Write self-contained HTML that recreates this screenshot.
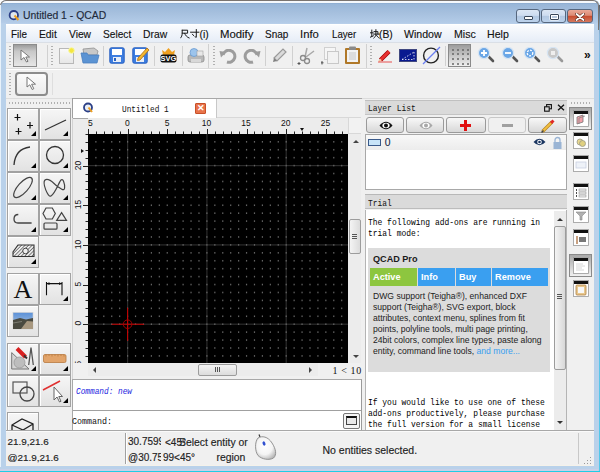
<!DOCTYPE html><html><head><meta charset="utf-8"><style>
*{margin:0;padding:0;box-sizing:border-box}
html,body{width:600px;height:472px;overflow:hidden;background:#f0f0f0;font-family:"Liberation Sans",sans-serif;}
.ab{position:absolute}
.t{position:absolute;white-space:nowrap;line-height:1}
.btn{position:absolute;border:1px solid #a9a9a9;border-radius:2px;background:linear-gradient(#f7f7f7,#e9e9e9 50%,#dcdcdc);}
.tb{position:absolute;border:1px solid #b5b5b5;border-radius:1px;background:linear-gradient(#f5f5f5,#e4e4e4)}
.ss{font-family:"Liberation Mono",monospace;transform-origin:0 0}
.corner{position:absolute;right:2px;bottom:3px;width:0;height:0;border-left:5px solid transparent;border-bottom:5px solid #000}
</style></head><body>
<div class="ab" style="left:0;top:0;width:600px;height:472px;background:#fff"></div>
<div class="ab" style="left:0;top:0;width:600px;height:472px;background:#b9d1ea;border-radius:6px 6px 0 0"></div>
<div class="ab" style="left:1px;top:1px;width:597px;height:23px;border-radius:5px 5px 0 0;background:linear-gradient(#f4f8fc 0,#f4f8fc 1.5px,#88a8cc 2px,#98b6d8 3px,#a6c0de 12px,#b4cce8 22px,#bcd2ec 23px);"></div>
<div class="ab" style="left:0;top:0;width:599px;height:30px;border:1px solid #7a7470;border-top-width:1.5px;border-bottom:none;border-radius:6px 6px 0 0"></div>
<div class="ab" style="left:599px;top:5px;width:1px;height:467px;background:linear-gradient(#55606c 0,#8ab8dc 30px,#70c0e8 60px,#50c8ea)"></div>
<div class="ab" style="left:0;top:5px;width:1px;height:462px;background:#e8f2fb"></div>
<div class="ab" style="left:0;top:471px;width:600px;height:1px;background:#20cde6"></div>
<div class="ab" style="left:0;top:469px;width:598px;height:2px;background:#c8d0e8"></div>
<div class="ab" style="left:6px;top:24px;width:588px;height:442px;background:#f0f0f0"></div>
<div class="ab" style="left:6px;top:465px;width:588px;height:1px;background:#f5f2ea"></div>
<svg class="ab" style="left:7px;top:9px" width="14" height="13" viewBox="0 0 14 13">
<circle cx="6.8" cy="6.2" r="4.2" fill="#dfe6ee" stroke="#2b3f86" stroke-width="1.8"/>
<path d="M7.5 6.5 L11.5 11" stroke="#f0a020" stroke-width="2"/></svg>
<div class="t" style="left:23px;top:11px;font-size:10.4px;color:#1e2a3a;-webkit-text-stroke:0.15px #1e2a3a">Untitled 1 - QCAD</div>
<div class="ab" style="left:516px;top:9px;width:24px;height:14px;border:1px solid #56677e;border-radius:3px;background:linear-gradient(#dbe6f4 0%,#cddcf0 45%,#b3c8e2 50%,#bcd2ec 100%)"><div class="ab" style="left:7px;top:6px;width:9px;height:4px;background:#fff;border:1px solid #39475a;border-radius:1px"></div></div>
<div class="ab" style="left:541px;top:9px;width:25px;height:14px;border:1px solid #56677e;border-radius:3px;background:linear-gradient(#dbe6f4 0%,#cddcf0 45%,#b3c8e2 50%,#bcd2ec 100%)"><div class="ab" style="left:7.5px;top:3.5px;width:9px;height:6px;border:1px solid #39475a;box-shadow:inset 0 0 0 1px #fff, 0 0 0 0.5px #fff;background:#b8c8dc;border-radius:1px"></div></div>
<div class="ab" style="left:567px;top:9px;width:26px;height:14px;border:1px solid #56677e;border-radius:3px;background:linear-gradient(#eaa898 0%,#dc8a74 45%,#c64a2e 50%,#d6785e 100%)"><svg class="ab" style="left:7px;top:2.5px" width="10" height="8" viewBox="0 0 10 8"><path d="M1.5 1 L8.5 7 M8.5 1 L1.5 7" stroke="#5a2a20" stroke-width="3" stroke-linecap="round"/><path d="M1.5 1 L8.5 7 M8.5 1 L1.5 7" stroke="#fff" stroke-width="1.8" stroke-linecap="round"/></svg></div>
<div class="ab" style="left:6px;top:24px;width:588px;height:18px;background:linear-gradient(#fbfcfe,#e6edf7);border-top:1px solid #fff"></div>
<svg class="ab" style="left:180px;top:29px" width="10" height="10" viewBox="0 0 10 10"><path d="M2.2 1.2 L7.6 1.2 L7.6 4.2 L2.2 4.2 M2.2 1.2 L2.2 4.2 C2.2 6.5 1.5 8 0.5 9 M4.6 4.3 C5.5 6.5 7 8.3 9.2 9" fill="none" stroke="#1a1a1a" stroke-width="1" stroke-linecap="round"/></svg>
<svg class="ab" style="left:190px;top:29px" width="10" height="10" viewBox="0 0 10 10"><path d="M0.5 3.2 L9 3.2 M6.3 0.5 L6.3 8.3 L5 7.8 M2.4 5.2 L3.6 6.6" fill="none" stroke="#1a1a1a" stroke-width="1" stroke-linecap="round"/></svg>
<svg class="ab" style="left:369.5px;top:29px" width="10" height="10" viewBox="0 0 10 10"><path d="M0.4 3.8 L3.2 3.8 M1.8 1 L1.8 7.4 M0.3 8.2 L3.4 6.8 M4 2.6 L7.9 2.6 L7.9 5.1 M3.6 5.1 L9.3 5.1 M5.9 0.6 L5.9 5.1 C5.8 7 5 8.2 3.8 9.1 M6.4 6.1 C7.2 7.5 8 8.4 9.3 9.1" fill="none" stroke="#1a1a1a" stroke-width="1" stroke-linecap="round"/></svg>
<div class="t" style="left:11.04px;top:29.7px;font-size:10.3px;color:#111;-webkit-text-stroke:0.12px #111;transform-origin:0 0;transform:scaleX(0.960)">File</div>
<div class="t" style="left:39.00px;top:29.7px;font-size:10.3px;color:#111;-webkit-text-stroke:0.12px #111;transform-origin:0 0;transform:scaleX(1.000)">Edit</div>
<div class="t" style="left:69.40px;top:29.7px;font-size:10.3px;color:#111;-webkit-text-stroke:0.12px #111;transform-origin:0 0;transform:scaleX(0.995)">View</div>
<div class="t" style="left:103.21px;top:29.7px;font-size:10.3px;color:#111;-webkit-text-stroke:0.12px #111;transform-origin:0 0;transform:scaleX(0.986)">Select</div>
<div class="t" style="left:143.00px;top:29.7px;font-size:10.3px;color:#111;-webkit-text-stroke:0.12px #111;transform-origin:0 0;transform:scaleX(1.004)">Draw</div>
<div class="t" style="left:199.50px;top:29.7px;font-size:10.3px;color:#111;-webkit-text-stroke:0.12px #111;transform-origin:0 0;transform:scaleX(1.000)">(i)</div>
<div class="t" style="left:219.90px;top:29.7px;font-size:10.3px;color:#111;-webkit-text-stroke:0.12px #111;transform-origin:0 0;transform:scaleX(1.103)">Modify</div>
<div class="t" style="left:265.41px;top:29.7px;font-size:10.3px;color:#111;-webkit-text-stroke:0.12px #111;transform-origin:0 0;transform:scaleX(0.970)">Snap</div>
<div class="t" style="left:300.32px;top:29.7px;font-size:10.3px;color:#111;-webkit-text-stroke:0.12px #111;transform-origin:0 0;transform:scaleX(1.094)">Info</div>
<div class="t" style="left:332.03px;top:29.7px;font-size:10.3px;color:#111;-webkit-text-stroke:0.12px #111;transform-origin:0 0;transform:scaleX(0.940)">Layer</div>
<div class="t" style="left:379.00px;top:29.7px;font-size:10.3px;color:#111;-webkit-text-stroke:0.12px #111;transform-origin:0 0;transform:scaleX(1.000)">(B)</div>
<div class="t" style="left:403.78px;top:29.7px;font-size:10.3px;color:#111;-webkit-text-stroke:0.12px #111;transform-origin:0 0;transform:scaleX(1.028)">Window</div>
<div class="t" style="left:453.78px;top:29.7px;font-size:10.3px;color:#111;-webkit-text-stroke:0.12px #111;transform-origin:0 0;transform:scaleX(1.030)">Misc</div>
<div class="t" style="left:487.38px;top:29.7px;font-size:10.3px;color:#111;-webkit-text-stroke:0.12px #111;transform-origin:0 0;transform:scaleX(1.030)">Help</div>
<div class="ab" style="left:6px;top:42px;width:588px;height:1px;background:#dadfe6"></div>
<div class="ab" style="left:6px;top:68px;width:588px;height:1px;background:#dcdcdc"></div>
<div class="ab" style="left:6px;top:69px;width:588px;height:1px;background:#fff"></div>
<div class="ab" style="left:9px;top:46px;width:2px;height:20px;background:repeating-linear-gradient(#b0b0b0 0 1px,transparent 1px 3px)"></div>
<div class="ab" style="left:13px;top:44px;width:24px;height:23px;border:1px solid #8c8c8c;background:linear-gradient(#9c9c9c,#c8c8c8 30%,#e6e6e6)"></div>
<svg class="ab" style="left:20px;top:49px" width="12" height="14" viewBox="0 0 12 14"><path d="M1 1 L1 11 L4 8.5 L6.5 13 L8 12.3 L5.8 8 L9.5 8 Z" fill="#fff" stroke="#777" stroke-width="1"/></svg>
<div class="ab" style="left:47px;top:45px;width:1px;height:22px;background:#d0d0d0"></div>
<div class="ab" style="left:51px;top:46px;width:2px;height:20px;background:repeating-linear-gradient(#b0b0b0 0 1px,transparent 1px 3px)"></div>
<svg class="ab" style="left:58px;top:47px" width="17" height="17" viewBox="0 0 17 17"><defs><linearGradient id="gd" x1="0" y1="0" x2="0" y2="1"><stop offset="0" stop-color="#fafafa"/><stop offset="1" stop-color="#e6e6e6"/></linearGradient></defs><rect x="1.5" y="1.5" width="14" height="15" fill="url(#gd)" stroke="#b8b8b8"/><circle cx="13.5" cy="3.5" r="2.8" fill="#f4e640" stroke="#f8f8a0" stroke-width="1"/></svg>
<svg class="ab" style="left:80px;top:47px" width="20" height="17" viewBox="0 0 20 17"><path d="M3 2 L14 1 L18 4 L17 8 L4 8 Z" fill="#c8c8c8" stroke="#909090" stroke-width="0.8"/><path d="M1 6 L7 6 L8 8 L19 8 L17 16 L3 16 Z" fill="#5b93d3" stroke="#4a7fbf" stroke-width="0.8"/></svg>
<div class="ab" style="left:103px;top:46px;width:1px;height:20px;background:#d0d0d0"></div>
<svg class="ab" style="left:109px;top:47px" width="16" height="17" viewBox="0 0 16 17"><rect x="0.8" y="0.8" width="14.4" height="15.4" rx="1.5" fill="#3d7de0" stroke="#2860c0"/><rect x="3" y="2" width="10" height="6" fill="#fff"/><rect x="4" y="10" width="8" height="5" fill="#e8eef8"/><rect x="5" y="11" width="2" height="3" fill="#2860c0"/></svg>
<svg class="ab" style="left:132px;top:46px" width="18" height="18" viewBox="0 0 18 18"><rect x="0.8" y="1.8" width="14.4" height="15.4" rx="1.5" fill="#3d7de0" stroke="#2860c0"/><rect x="3" y="3" width="10" height="6" fill="#fff"/><rect x="4" y="11" width="8" height="5" fill="#e8eef8"/><path d="M6 12 L15 2 L17 4 L8 14 L5.5 14.5 Z" fill="#f2b830" stroke="#b06a10" stroke-width="0.8"/></svg>
<div class="ab" style="left:154px;top:46px;width:1px;height:20px;background:#d0d0d0"></div>
<svg class="ab" style="left:160px;top:47px" width="17" height="16" viewBox="0 0 17 16"><path d="M3 8 L2 3 L5 5 L8.5 1 L12 5 L15 3 L14 8 Z" fill="#f0a020"/><rect x="0.5" y="7.5" width="16" height="8" rx="2" fill="#111"/><text x="8.5" y="14.2" font-family="Liberation Sans" font-size="7.5" font-weight="bold" fill="#fff" text-anchor="middle">SVG</text></svg>
<div class="ab" style="left:182px;top:46px;width:1px;height:20px;background:#d0d0d0"></div>
<svg class="ab" style="left:187px;top:47px" width="18" height="17" viewBox="0 0 18 17"><rect x="1" y="8" width="16" height="7" rx="2" fill="#b8b8b8" stroke="#8c8c8c" stroke-width="0.8"/><rect x="4" y="12" width="10" height="3" fill="#d8d8d8"/><circle cx="7" cy="5.5" r="4" fill="#9cc4ec" stroke="#6a9ad0" stroke-width="0.8"/><rect x="10" y="4" width="6" height="5" fill="#e8e8e8" stroke="#a0a0a0" stroke-width="0.6"/></svg>
<div class="ab" style="left:208px;top:44px;width:1px;height:24px;background:#d0d0d0"></div>
<div class="ab" style="left:213px;top:46px;width:2px;height:20px;background:repeating-linear-gradient(#b0b0b0 0 1px,transparent 1px 3px)"></div>
<svg class="ab" style="left:219px;top:49px" width="19" height="15" viewBox="0 0 19 15"><path d="M4 6 A6 6 0 1 1 8 13" fill="none" stroke="#9c9c9c" stroke-width="3"/><path d="M0.5 2 L7 3 L2 8.5 Z" fill="#9c9c9c"/></svg>
<svg class="ab" style="left:242px;top:49px" width="19" height="15" viewBox="0 0 19 15"><path d="M15 6 A6 6 0 1 0 11 13" fill="none" stroke="#9c9c9c" stroke-width="3"/><path d="M18.5 2 L12 3 L17 8.5 Z" fill="#9c9c9c"/></svg>
<div class="ab" style="left:265px;top:46px;width:1px;height:20px;background:#d0d0d0"></div>
<svg class="ab" style="left:271px;top:47px" width="17" height="17" viewBox="0 0 17 17"><path d="M3 11 L12 2 L15 5 L6 14 Z" fill="#dadada" stroke="#9a9a9a" stroke-width="1.2"/><path d="M2 15 L3 11 L6 14 Z" fill="#808080"/></svg>
<div class="ab" style="left:292px;top:46px;width:1px;height:20px;background:#d0d0d0"></div>
<svg class="ab" style="left:297px;top:47px" width="19" height="18" viewBox="0 0 19 18"><path d="M8 10 L10 1 M9 10 L17 4" stroke="#a8a8a8" stroke-width="1.5" fill="none"/><circle cx="6" cy="11" r="2.5" fill="none" stroke="#8a8a8a" stroke-width="1.3"/><circle cx="10" cy="14" r="2.5" fill="none" stroke="#8a8a8a" stroke-width="1.3"/><path d="M2 15 L2 18 M0.5 16.5 L3.5 16.5" stroke="#555" stroke-width="1"/></svg>
<svg class="ab" style="left:321px;top:47px" width="18" height="18" viewBox="0 0 18 18"><rect x="3.5" y="0.5" width="11" height="12" fill="#f6f6f6" stroke="#d0d0d0"/><rect x="6.5" y="4.5" width="11" height="12" fill="#f2f2f2" stroke="#c8c8c8"/><path d="M1 14 L1 17.5 M-0.5 15.8 L2.5 15.8" stroke="#555" stroke-width="1"/></svg>
<svg class="ab" style="left:344px;top:46px" width="17" height="19" viewBox="0 0 17 19"><rect x="1" y="2" width="15" height="16" rx="1" fill="#b07828"/><rect x="3" y="4" width="11" height="12" fill="#f2f2f2"/><rect x="5" y="0.5" width="7" height="3.5" rx="1" fill="#8a8a8a"/><rect x="5" y="6" width="7" height="8" fill="#dcdcdc"/></svg>
<div class="ab" style="left:366px;top:44px;width:1px;height:24px;background:#d0d0d0"></div>
<div class="ab" style="left:370px;top:46px;width:2px;height:20px;background:repeating-linear-gradient(#b0b0b0 0 1px,transparent 1px 3px)"></div>
<svg class="ab" style="left:377px;top:48px" width="16" height="15" viewBox="0 0 16 15"><path d="M3.5 12 L12 3.5" stroke="#a00000" stroke-width="4.2"/><path d="M3.5 12 L12 3.5" stroke="#e83030" stroke-width="2.8"/><path d="M2 13.5 L4 11.5" stroke="#f0c8a0" stroke-width="2"/><path d="M1 14 L15 14" stroke="#e85050" stroke-width="1"/></svg>
<svg class="ab" style="left:399px;top:49px" width="19" height="13" viewBox="0 0 19 13"><rect x="0.5" y="0.5" width="17" height="12" fill="#0a1a90" stroke="#404880"/><path d="M3 10.5 L15 3" stroke="#fff" stroke-width="0.8" stroke-dasharray="1.5 1.5"/><path d="M3 10.5 L15 10.5 L15 3" fill="none" stroke="#fff" stroke-width="0.8" stroke-dasharray="1.5 1.5"/></svg>
<svg class="ab" style="left:421px;top:46px" width="20" height="19" viewBox="0 0 20 19"><circle cx="10" cy="9.5" r="7.4" fill="none" stroke="#222" stroke-width="1.4"/><path d="M2 18 L19 1" stroke="#6a7ef0" stroke-width="1.2"/></svg>
<div class="ab" style="left:445px;top:46px;width:1px;height:20px;background:#d0d0d0"></div>
<div class="ab" style="left:448px;top:44px;width:23px;height:23px;border:1px solid #8a8a8a;background:linear-gradient(#9c9c9c,#f0f0f0)"></div>
<div class="ab" style="left:452px;top:49px;width:2px;height:2px;background:#666;border-radius:1px"></div>
<div class="ab" style="left:452px;top:53px;width:2px;height:2px;background:#666;border-radius:1px"></div>
<div class="ab" style="left:452px;top:58px;width:2px;height:2px;background:#666;border-radius:1px"></div>
<div class="ab" style="left:452px;top:63px;width:2px;height:2px;background:#666;border-radius:1px"></div>
<div class="ab" style="left:457px;top:49px;width:2px;height:2px;background:#666;border-radius:1px"></div>
<div class="ab" style="left:457px;top:53px;width:2px;height:2px;background:#666;border-radius:1px"></div>
<div class="ab" style="left:457px;top:58px;width:2px;height:2px;background:#666;border-radius:1px"></div>
<div class="ab" style="left:457px;top:63px;width:2px;height:2px;background:#666;border-radius:1px"></div>
<div class="ab" style="left:462px;top:49px;width:2px;height:2px;background:#666;border-radius:1px"></div>
<div class="ab" style="left:462px;top:53px;width:2px;height:2px;background:#666;border-radius:1px"></div>
<div class="ab" style="left:462px;top:58px;width:2px;height:2px;background:#666;border-radius:1px"></div>
<div class="ab" style="left:462px;top:63px;width:2px;height:2px;background:#666;border-radius:1px"></div>
<div class="ab" style="left:467px;top:49px;width:2px;height:2px;background:#666;border-radius:1px"></div>
<div class="ab" style="left:467px;top:53px;width:2px;height:2px;background:#666;border-radius:1px"></div>
<div class="ab" style="left:467px;top:58px;width:2px;height:2px;background:#666;border-radius:1px"></div>
<div class="ab" style="left:467px;top:63px;width:2px;height:2px;background:#666;border-radius:1px"></div>
<svg class="ab" style="left:477px;top:47px" width="20" height="17" viewBox="0 0 20 17"><path d="M10.5 8.5 L16 14" stroke="#555" stroke-width="2.6" stroke-linecap="round"/><circle cx="7" cy="6" r="5.6" fill="#6aa6e6" stroke="#d6e4f2" stroke-width="1.3"/><path d="M7 3 L7 9 M4 6 L10 6" stroke="#fff" stroke-width="1.8"/></svg>
<svg class="ab" style="left:501px;top:47px" width="20" height="17" viewBox="0 0 20 17"><path d="M10.5 8.5 L16 14" stroke="#555" stroke-width="2.6" stroke-linecap="round"/><circle cx="7" cy="6" r="5.6" fill="#6aa6e6" stroke="#d6e4f2" stroke-width="1.3"/><path d="M4 6 L10 6" stroke="#fff" stroke-width="1.8"/></svg>
<svg class="ab" style="left:523px;top:47px" width="20" height="17" viewBox="0 0 20 17"><path d="M10.5 8.5 L16 14" stroke="#555" stroke-width="2.6" stroke-linecap="round"/><circle cx="7" cy="6" r="5.6" fill="#6aa6e6" stroke="#d6e4f2" stroke-width="1.3"/><circle cx="7" cy="6" r="2.8" fill="none" stroke="#fff" stroke-width="1.3" stroke-dasharray="2 1.2"/></svg>
<svg class="ab" style="left:546px;top:47px" width="20" height="17" viewBox="0 0 20 17"><path d="M10.5 8.5 L16 14" stroke="#999" stroke-width="2.6" stroke-linecap="round"/><circle cx="7" cy="6" r="5.6" fill="#c8c8c8" stroke="#d6e4f2" stroke-width="1.3"/><rect x="5" y="4" width="4" height="4" fill="#eee"/></svg>
<div class="t" style="left:584px;top:49px;font-size:12px;font-weight:bold;color:#111">&#187;</div>
<div class="ab" style="left:9px;top:73px;width:2px;height:22px;background:repeating-linear-gradient(#b0b0b0 0 1px,transparent 1px 3px)"></div>
<div class="ab" style="left:15px;top:72px;width:33px;height:24px;border:2px solid #8c8c8c;border-radius:4px;background:linear-gradient(#fafafa,#ececec)"></div>
<svg class="ab" style="left:26px;top:76px" width="12" height="15" viewBox="0 0 12 15"><path d="M1 1 L1 11 L3.8 8.8 L6.2 13.5 L7.8 12.7 L5.6 8.2 L9.5 8.2 Z" fill="#fff" stroke="#777" stroke-width="1"/></svg>
<div class="ab" style="left:52px;top:73px;width:1px;height:22px;background:#dedede"></div>
<div class="ab" style="left:6px;top:98px;width:588px;height:1px;background:#dcdcdc"></div>
<div class="ab" style="left:9px;top:102px;width:62px;height:2px;background:repeating-linear-gradient(90deg,#b0b0b0 0 1px,transparent 1px 3px)"></div>
<div class="ab" style="left:7px;top:108px;width:32px;height:32px;border:1px solid #a2a2a2;background:linear-gradient(#f6f6f6,#e2e2e2);box-shadow:inset 1px 1px 0 #fff"><svg class="ab" style="left:0;top:0" width="30" height="30" viewBox="0 0 30 30"><path d="M9.5 5 L9.5 11.5 M6.5 8.5 L12.5 8.5 M22 13 L22 19.5 M19 16.5 L25 16.5 M10.5 19 L10.5 25.5 M7.5 22.5 L13.5 22.5" stroke="#111" stroke-width="1.2"/></svg><div class="corner"></div></div>
<div class="ab" style="left:39px;top:108px;width:32px;height:32px;border:1px solid #a2a2a2;background:linear-gradient(#f6f6f6,#e2e2e2);box-shadow:inset 1px 1px 0 #fff"><svg class="ab" style="left:0;top:0" width="30" height="30" viewBox="0 0 30 30"><path d="M5 21 L26 11" fill="none" stroke="#333" stroke-width="1.3"/></svg><div class="corner"></div></div>
<div class="ab" style="left:7px;top:140px;width:32px;height:32px;border:1px solid #a2a2a2;background:linear-gradient(#f6f6f6,#e2e2e2);box-shadow:inset 1px 1px 0 #fff"><svg class="ab" style="left:0;top:0" width="30" height="30" viewBox="0 0 30 30"><path d="M6 24 Q7 8 22 6" fill="none" stroke="#333" stroke-width="1.3" stroke-width="1.6"/></svg><div class="corner"></div></div>
<div class="ab" style="left:39px;top:140px;width:32px;height:32px;border:1px solid #a2a2a2;background:linear-gradient(#f6f6f6,#e2e2e2);box-shadow:inset 1px 1px 0 #fff"><svg class="ab" style="left:0;top:0" width="30" height="30" viewBox="0 0 30 30"><circle cx="15" cy="14" r="8.5" fill="none" stroke="#333" stroke-width="1.3"/></svg><div class="corner"></div></div>
<div class="ab" style="left:7px;top:172px;width:32px;height:32px;border:1px solid #a2a2a2;background:linear-gradient(#f6f6f6,#e2e2e2);box-shadow:inset 1px 1px 0 #fff"><svg class="ab" style="left:0;top:0" width="30" height="30" viewBox="0 0 30 30"><ellipse cx="15" cy="14.5" rx="12.8" ry="5" transform="rotate(-48 15 14.5)" fill="none" stroke="#444" stroke-width="1.2"/></svg><div class="corner"></div></div>
<div class="ab" style="left:39px;top:172px;width:32px;height:32px;border:1px solid #a2a2a2;background:linear-gradient(#f6f6f6,#e2e2e2);box-shadow:inset 1px 1px 0 #fff"><svg class="ab" style="left:0;top:0" width="30" height="30" viewBox="0 0 30 30"><path d="M5 7 C9 4 14 11 17 13 C20 15 24 19 24.6 15 C25 11 23 5 21 7 C19 9 15 21 11 23 C8 25 2 10 5 7 Z" fill="none" stroke="#444" stroke-width="1.2"/></svg><div class="corner"></div></div>
<div class="ab" style="left:7px;top:204px;width:32px;height:32px;border:1px solid #a2a2a2;background:linear-gradient(#f6f6f6,#e2e2e2);box-shadow:inset 1px 1px 0 #fff"><svg class="ab" style="left:0;top:0" width="30" height="30" viewBox="0 0 30 30"><path d="M10.3 9.5 C7.5 9.5 6 11.5 6 14 C6 16.5 7.5 18 10 18 L23.6 18" fill="none" stroke="#444" stroke-width="1.3"/></svg><div class="corner"></div></div>
<div class="ab" style="left:39px;top:204px;width:32px;height:32px;border:1px solid #a2a2a2;background:linear-gradient(#f6f6f6,#e2e2e2);box-shadow:inset 1px 1px 0 #fff"><svg class="ab" style="left:0;top:0" width="30" height="30" viewBox="0 0 30 30"><path d="M6 3 L12.3 3 L15.3 8.5 L12.3 14 L6 14 L3 8.5 Z" fill="none" stroke="#444" stroke-width="1.2"/><path d="M16.7 15.3 L21.6 7.7 L26.5 15.3 Z" fill="none" stroke="#444" stroke-width="1.2"/><rect x="4" y="18" width="13" height="6.2" rx="1" fill="none" stroke="#444" stroke-width="1.2"/></svg><div class="corner"></div></div>
<div class="ab" style="left:7px;top:236px;width:32px;height:32px;border:1px solid #a2a2a2;background:linear-gradient(#f6f6f6,#e2e2e2);box-shadow:inset 1px 1px 0 #fff"><svg class="ab" style="left:0;top:0" width="30" height="30" viewBox="0 0 30 30"><defs><pattern id="hp" width="2.5" height="2.5" patternUnits="userSpaceOnUse" patternTransform="rotate(45)"><rect width="0.8" height="2.5" fill="#666"/></pattern></defs><path d="M10 8 L26 8 L26 19.5 L5 19.5 L5 15 Z" fill="url(#hp)" stroke="#333" stroke-width="1.1"/><circle cx="17.5" cy="14" r="2.8" fill="#eee" stroke="#333" stroke-width="0.9"/></svg><div class="corner"></div></div>
<div class="ab" style="left:7px;top:273px;width:32px;height:32px;border:1px solid #a2a2a2;background:linear-gradient(#f6f6f6,#e2e2e2);box-shadow:inset 1px 1px 0 #fff"><svg class="ab" style="left:0;top:0" width="30" height="30" viewBox="0 0 30 30"><text x="0" y="0" font-family="Liberation Serif" font-size="25.5" fill="#111" text-anchor="middle" transform="translate(15 24.2) scale(1.02 1)">A</text></svg></div>
<div class="ab" style="left:39px;top:273px;width:32px;height:32px;border:1px solid #a2a2a2;background:linear-gradient(#f6f6f6,#e2e2e2);box-shadow:inset 1px 1px 0 #fff"><svg class="ab" style="left:0;top:0" width="30" height="30" viewBox="0 0 30 30"><path d="M6.5 8 L6.5 21.2 M22 8 L22 21.2 M6.5 9.6 L22 9.6" stroke="#111" stroke-width="1.1"/><path d="M6.5 9.6 L9.5 8.2 L9.5 11 Z M22 9.6 L19 8.2 L19 11 Z" fill="#111"/></svg><div class="corner"></div></div>
<div class="ab" style="left:7px;top:305px;width:32px;height:32px;border:1px solid #a2a2a2;background:linear-gradient(#f6f6f6,#e2e2e2);box-shadow:inset 1px 1px 0 #fff"><svg class="ab" style="left:0;top:0" width="30" height="30" viewBox="0 0 30 30"><defs><linearGradient id="sky" x1="0" y1="0" x2="0" y2="1"><stop offset="0" stop-color="#5a90d8"/><stop offset="1" stop-color="#b8cce0"/></linearGradient></defs><rect x="5" y="6.5" width="20" height="16.5" fill="url(#sky)" stroke="#d0d0d0" stroke-width="0.6"/><path d="M5 14 L12 12 L18 13.5 L25 12 L25 23 L5 23 Z" fill="#4a4a40"/><path d="M13 23 L19 15 L25 15.5 L25 23 Z" fill="#a89880"/><path d="M5 17 L14 15.5" stroke="#8a8a80" stroke-width="0.8"/></svg></div>
<div class="ab" style="left:7px;top:343px;width:32px;height:32px;border:1px solid #a2a2a2;background:linear-gradient(#f6f6f6,#e2e2e2);box-shadow:inset 1px 1px 0 #fff"><svg class="ab" style="left:0;top:0" width="30" height="30" viewBox="0 0 30 30"><path d="M3.7 8.6 L3.7 25 L21 25 Z" fill="#d4d4d4" stroke="#777" stroke-width="1"/><circle cx="11.5" cy="18.5" r="5.5" fill="#bdbdbd" stroke="#999" stroke-width="0.8"/><path d="M9 4.5 L17.5 13" stroke="#d82020" stroke-width="4"/><path d="M16 11.5 L19 14.5" stroke="#333" stroke-width="2"/><path d="M23 3.5 L20.7 21 M23 3.5 L25.3 21" stroke="#555" stroke-width="1.3"/></svg><div class="corner"></div></div>
<div class="ab" style="left:39px;top:343px;width:32px;height:32px;border:1px solid #a2a2a2;background:linear-gradient(#f6f6f6,#e2e2e2);box-shadow:inset 1px 1px 0 #fff"><svg class="ab" style="left:0;top:0" width="30" height="30" viewBox="0 0 30 30"><rect x="3.5" y="10.5" width="22.5" height="8" rx="1.5" fill="#e2a46a" stroke="#b87a40" stroke-width="0.8"/><path d="M6 10.5 L6 12.5 M9 10.5 L9 12 M12 10.5 L12 12.5 M15 10.5 L15 12 M18 10.5 L18 12.5 M21 10.5 L21 12 M24 10.5 L24 12.5" stroke="#b07030" stroke-width="0.6"/></svg><div class="corner"></div></div>
<div class="ab" style="left:7px;top:375px;width:32px;height:32px;border:1px solid #a2a2a2;background:linear-gradient(#f6f6f6,#e2e2e2);box-shadow:inset 1px 1px 0 #fff"><svg class="ab" style="left:0;top:0" width="30" height="30" viewBox="0 0 30 30"><rect x="5" y="6" width="14" height="11" fill="none" stroke="#555" stroke-width="1.2"/><circle cx="19" cy="18" r="7" fill="none" stroke="#444" stroke-width="1.3"/></svg></div>
<div class="ab" style="left:39px;top:375px;width:32px;height:32px;border:1px solid #a2a2a2;background:linear-gradient(#f6f6f6,#e2e2e2);box-shadow:inset 1px 1px 0 #fff"><svg class="ab" style="left:0;top:0" width="30" height="30" viewBox="0 0 30 30"><path d="M3 14 L20 5" stroke="#e03030" stroke-width="1.5"/><path d="M14 11 L14 24 L17 21 L19.5 26 L21 25.3 L18.8 20.5 L22.5 20.5 Z" fill="#fff" stroke="#666" stroke-width="1"/></svg><div class="corner"></div></div>
<div class="ab" style="left:7px;top:412px;width:32px;height:32px;border:1px solid #a2a2a2;background:linear-gradient(#f6f6f6,#e2e2e2);box-shadow:inset 1px 1px 0 #fff"><svg class="ab" style="left:0;top:0" width="30" height="30" viewBox="0 0 30 30"><path d="M4 12 L14 6 L25 11 L25 22 L15 28 L4 22 Z M4 12 L15 17 L25 11 M15 17 L15 28" fill="none" stroke="#222" stroke-width="1.3"/></svg></div>
<div class="ab" style="left:72px;top:98px;width:290px;height:281px;background:#f0f0f0;border-left:1px solid #d2d2d2;border-top:1px solid #a8a8a8"></div>
<div class="ab" style="left:72px;top:98px;width:1px;height:20px;background:#a0a0a0"></div>
<div class="ab" style="left:73px;top:99px;width:144px;height:19px;background:#fff;border-right:1px solid #c8c8c8"></div>
<div class="ab" style="left:217px;top:117px;width:144px;height:1px;background:#d8d8d8"></div>
<svg class="ab" style="left:81.5px;top:102px" width="13" height="12" viewBox="0 0 13 12"><circle cx="6" cy="5.5" r="4" fill="#e8eef6" stroke="#2b3f86" stroke-width="1.8"/><path d="M6.5 5.5 L10 10" stroke="#f0a020" stroke-width="2"/></svg>
<div class="t ss" style="left:121.8px;top:105px;font-size:9.6px;color:#111;transform:scaleX(0.81)">Untitled 1</div>
<div class="ab" style="left:195px;top:103px;width:11px;height:11px;background:#e8734a;border:1px solid #c85028;border-radius:1px"></div>
<div class="t" style="left:196.5px;top:104px;font-size:9px;font-weight:bold;color:#fff">&#x2715;</div>
<div class="ab" style="left:73px;top:118px;width:275px;height:16px;background:#ececec"></div>
<div class="ab" style="left:73px;top:134px;width:15px;height:229px;background:#ececec"></div>
<div class="ab" style="left:73px;top:118px;width:15px;height:1px;background:#a8a8a8"></div>
<svg class="ab" style="left:88px;top:134px" width="260" height="229" viewBox="0 0 260 229"><rect width="260" height="229" fill="#000"/><rect x="39.00" y="0" width="1.2" height="229" fill="#2c2c2c"/><rect x="118.30" y="0" width="1.2" height="229" fill="#2c2c2c"/><rect x="197.60" y="0" width="1.2" height="229" fill="#2c2c2c"/><rect x="0" y="189.60" width="260" height="1.2" fill="#2c2c2c"/><rect x="0" y="110.30" width="260" height="1.2" fill="#2c2c2c"/><rect x="0" y="31.00" width="260" height="1.2" fill="#2c2c2c"/><rect x="7.28" y="221.12" width="1.2" height="1.6" fill="#646464"/><rect x="7.28" y="213.19" width="1.2" height="1.6" fill="#646464"/><rect x="7.28" y="205.26" width="1.2" height="1.6" fill="#646464"/><rect x="7.28" y="197.33" width="1.2" height="1.6" fill="#646464"/><rect x="7.28" y="189.40" width="1.2" height="1.6" fill="#646464"/><rect x="7.28" y="181.47" width="1.2" height="1.6" fill="#646464"/><rect x="7.28" y="173.54" width="1.2" height="1.6" fill="#646464"/><rect x="7.28" y="165.61" width="1.2" height="1.6" fill="#646464"/><rect x="7.28" y="157.68" width="1.2" height="1.6" fill="#646464"/><rect x="7.28" y="149.75" width="1.2" height="1.6" fill="#646464"/><rect x="7.28" y="141.82" width="1.2" height="1.6" fill="#646464"/><rect x="7.28" y="133.89" width="1.2" height="1.6" fill="#646464"/><rect x="7.28" y="125.96" width="1.2" height="1.6" fill="#646464"/><rect x="7.28" y="118.03" width="1.2" height="1.6" fill="#646464"/><rect x="7.28" y="110.10" width="1.2" height="1.6" fill="#646464"/><rect x="7.28" y="102.17" width="1.2" height="1.6" fill="#646464"/><rect x="7.28" y="94.24" width="1.2" height="1.6" fill="#646464"/><rect x="7.28" y="86.31" width="1.2" height="1.6" fill="#646464"/><rect x="7.28" y="78.38" width="1.2" height="1.6" fill="#646464"/><rect x="7.28" y="70.45" width="1.2" height="1.6" fill="#646464"/><rect x="7.28" y="62.52" width="1.2" height="1.6" fill="#646464"/><rect x="7.28" y="54.59" width="1.2" height="1.6" fill="#646464"/><rect x="7.28" y="46.66" width="1.2" height="1.6" fill="#646464"/><rect x="7.28" y="38.73" width="1.2" height="1.6" fill="#646464"/><rect x="7.28" y="30.80" width="1.2" height="1.6" fill="#646464"/><rect x="7.28" y="22.87" width="1.2" height="1.6" fill="#646464"/><rect x="7.28" y="14.94" width="1.2" height="1.6" fill="#646464"/><rect x="7.28" y="7.01" width="1.2" height="1.6" fill="#646464"/><rect x="15.21" y="221.12" width="1.2" height="1.6" fill="#646464"/><rect x="15.21" y="213.19" width="1.2" height="1.6" fill="#646464"/><rect x="15.21" y="205.26" width="1.2" height="1.6" fill="#646464"/><rect x="15.21" y="197.33" width="1.2" height="1.6" fill="#646464"/><rect x="15.21" y="189.40" width="1.2" height="1.6" fill="#646464"/><rect x="15.21" y="181.47" width="1.2" height="1.6" fill="#646464"/><rect x="15.21" y="173.54" width="1.2" height="1.6" fill="#646464"/><rect x="15.21" y="165.61" width="1.2" height="1.6" fill="#646464"/><rect x="15.21" y="157.68" width="1.2" height="1.6" fill="#646464"/><rect x="15.21" y="149.75" width="1.2" height="1.6" fill="#646464"/><rect x="15.21" y="141.82" width="1.2" height="1.6" fill="#646464"/><rect x="15.21" y="133.89" width="1.2" height="1.6" fill="#646464"/><rect x="15.21" y="125.96" width="1.2" height="1.6" fill="#646464"/><rect x="15.21" y="118.03" width="1.2" height="1.6" fill="#646464"/><rect x="15.21" y="110.10" width="1.2" height="1.6" fill="#646464"/><rect x="15.21" y="102.17" width="1.2" height="1.6" fill="#646464"/><rect x="15.21" y="94.24" width="1.2" height="1.6" fill="#646464"/><rect x="15.21" y="86.31" width="1.2" height="1.6" fill="#646464"/><rect x="15.21" y="78.38" width="1.2" height="1.6" fill="#646464"/><rect x="15.21" y="70.45" width="1.2" height="1.6" fill="#646464"/><rect x="15.21" y="62.52" width="1.2" height="1.6" fill="#646464"/><rect x="15.21" y="54.59" width="1.2" height="1.6" fill="#646464"/><rect x="15.21" y="46.66" width="1.2" height="1.6" fill="#646464"/><rect x="15.21" y="38.73" width="1.2" height="1.6" fill="#646464"/><rect x="15.21" y="30.80" width="1.2" height="1.6" fill="#646464"/><rect x="15.21" y="22.87" width="1.2" height="1.6" fill="#646464"/><rect x="15.21" y="14.94" width="1.2" height="1.6" fill="#646464"/><rect x="15.21" y="7.01" width="1.2" height="1.6" fill="#646464"/><rect x="23.14" y="221.12" width="1.2" height="1.6" fill="#646464"/><rect x="23.14" y="213.19" width="1.2" height="1.6" fill="#646464"/><rect x="23.14" y="205.26" width="1.2" height="1.6" fill="#646464"/><rect x="23.14" y="197.33" width="1.2" height="1.6" fill="#646464"/><rect x="23.14" y="189.40" width="1.2" height="1.6" fill="#646464"/><rect x="23.14" y="181.47" width="1.2" height="1.6" fill="#646464"/><rect x="23.14" y="173.54" width="1.2" height="1.6" fill="#646464"/><rect x="23.14" y="165.61" width="1.2" height="1.6" fill="#646464"/><rect x="23.14" y="157.68" width="1.2" height="1.6" fill="#646464"/><rect x="23.14" y="149.75" width="1.2" height="1.6" fill="#646464"/><rect x="23.14" y="141.82" width="1.2" height="1.6" fill="#646464"/><rect x="23.14" y="133.89" width="1.2" height="1.6" fill="#646464"/><rect x="23.14" y="125.96" width="1.2" height="1.6" fill="#646464"/><rect x="23.14" y="118.03" width="1.2" height="1.6" fill="#646464"/><rect x="23.14" y="110.10" width="1.2" height="1.6" fill="#646464"/><rect x="23.14" y="102.17" width="1.2" height="1.6" fill="#646464"/><rect x="23.14" y="94.24" width="1.2" height="1.6" fill="#646464"/><rect x="23.14" y="86.31" width="1.2" height="1.6" fill="#646464"/><rect x="23.14" y="78.38" width="1.2" height="1.6" fill="#646464"/><rect x="23.14" y="70.45" width="1.2" height="1.6" fill="#646464"/><rect x="23.14" y="62.52" width="1.2" height="1.6" fill="#646464"/><rect x="23.14" y="54.59" width="1.2" height="1.6" fill="#646464"/><rect x="23.14" y="46.66" width="1.2" height="1.6" fill="#646464"/><rect x="23.14" y="38.73" width="1.2" height="1.6" fill="#646464"/><rect x="23.14" y="30.80" width="1.2" height="1.6" fill="#646464"/><rect x="23.14" y="22.87" width="1.2" height="1.6" fill="#646464"/><rect x="23.14" y="14.94" width="1.2" height="1.6" fill="#646464"/><rect x="23.14" y="7.01" width="1.2" height="1.6" fill="#646464"/><rect x="31.07" y="221.12" width="1.2" height="1.6" fill="#646464"/><rect x="31.07" y="213.19" width="1.2" height="1.6" fill="#646464"/><rect x="31.07" y="205.26" width="1.2" height="1.6" fill="#646464"/><rect x="31.07" y="197.33" width="1.2" height="1.6" fill="#646464"/><rect x="31.07" y="189.40" width="1.2" height="1.6" fill="#646464"/><rect x="31.07" y="181.47" width="1.2" height="1.6" fill="#646464"/><rect x="31.07" y="173.54" width="1.2" height="1.6" fill="#646464"/><rect x="31.07" y="165.61" width="1.2" height="1.6" fill="#646464"/><rect x="31.07" y="157.68" width="1.2" height="1.6" fill="#646464"/><rect x="31.07" y="149.75" width="1.2" height="1.6" fill="#646464"/><rect x="31.07" y="141.82" width="1.2" height="1.6" fill="#646464"/><rect x="31.07" y="133.89" width="1.2" height="1.6" fill="#646464"/><rect x="31.07" y="125.96" width="1.2" height="1.6" fill="#646464"/><rect x="31.07" y="118.03" width="1.2" height="1.6" fill="#646464"/><rect x="31.07" y="110.10" width="1.2" height="1.6" fill="#646464"/><rect x="31.07" y="102.17" width="1.2" height="1.6" fill="#646464"/><rect x="31.07" y="94.24" width="1.2" height="1.6" fill="#646464"/><rect x="31.07" y="86.31" width="1.2" height="1.6" fill="#646464"/><rect x="31.07" y="78.38" width="1.2" height="1.6" fill="#646464"/><rect x="31.07" y="70.45" width="1.2" height="1.6" fill="#646464"/><rect x="31.07" y="62.52" width="1.2" height="1.6" fill="#646464"/><rect x="31.07" y="54.59" width="1.2" height="1.6" fill="#646464"/><rect x="31.07" y="46.66" width="1.2" height="1.6" fill="#646464"/><rect x="31.07" y="38.73" width="1.2" height="1.6" fill="#646464"/><rect x="31.07" y="30.80" width="1.2" height="1.6" fill="#646464"/><rect x="31.07" y="22.87" width="1.2" height="1.6" fill="#646464"/><rect x="31.07" y="14.94" width="1.2" height="1.6" fill="#646464"/><rect x="31.07" y="7.01" width="1.2" height="1.6" fill="#646464"/><rect x="39.00" y="221.12" width="1.2" height="1.6" fill="#646464"/><rect x="39.00" y="213.19" width="1.2" height="1.6" fill="#646464"/><rect x="39.00" y="205.26" width="1.2" height="1.6" fill="#646464"/><rect x="39.00" y="197.33" width="1.2" height="1.6" fill="#646464"/><rect x="39.00" y="189.40" width="1.2" height="1.6" fill="#646464"/><rect x="39.00" y="181.47" width="1.2" height="1.6" fill="#646464"/><rect x="39.00" y="173.54" width="1.2" height="1.6" fill="#646464"/><rect x="39.00" y="165.61" width="1.2" height="1.6" fill="#646464"/><rect x="39.00" y="157.68" width="1.2" height="1.6" fill="#646464"/><rect x="39.00" y="149.75" width="1.2" height="1.6" fill="#646464"/><rect x="39.00" y="141.82" width="1.2" height="1.6" fill="#646464"/><rect x="39.00" y="133.89" width="1.2" height="1.6" fill="#646464"/><rect x="39.00" y="125.96" width="1.2" height="1.6" fill="#646464"/><rect x="39.00" y="118.03" width="1.2" height="1.6" fill="#646464"/><rect x="39.00" y="110.10" width="1.2" height="1.6" fill="#646464"/><rect x="39.00" y="102.17" width="1.2" height="1.6" fill="#646464"/><rect x="39.00" y="94.24" width="1.2" height="1.6" fill="#646464"/><rect x="39.00" y="86.31" width="1.2" height="1.6" fill="#646464"/><rect x="39.00" y="78.38" width="1.2" height="1.6" fill="#646464"/><rect x="39.00" y="70.45" width="1.2" height="1.6" fill="#646464"/><rect x="39.00" y="62.52" width="1.2" height="1.6" fill="#646464"/><rect x="39.00" y="54.59" width="1.2" height="1.6" fill="#646464"/><rect x="39.00" y="46.66" width="1.2" height="1.6" fill="#646464"/><rect x="39.00" y="38.73" width="1.2" height="1.6" fill="#646464"/><rect x="39.00" y="30.80" width="1.2" height="1.6" fill="#646464"/><rect x="39.00" y="22.87" width="1.2" height="1.6" fill="#646464"/><rect x="39.00" y="14.94" width="1.2" height="1.6" fill="#646464"/><rect x="39.00" y="7.01" width="1.2" height="1.6" fill="#646464"/><rect x="46.93" y="221.12" width="1.2" height="1.6" fill="#646464"/><rect x="46.93" y="213.19" width="1.2" height="1.6" fill="#646464"/><rect x="46.93" y="205.26" width="1.2" height="1.6" fill="#646464"/><rect x="46.93" y="197.33" width="1.2" height="1.6" fill="#646464"/><rect x="46.93" y="189.40" width="1.2" height="1.6" fill="#646464"/><rect x="46.93" y="181.47" width="1.2" height="1.6" fill="#646464"/><rect x="46.93" y="173.54" width="1.2" height="1.6" fill="#646464"/><rect x="46.93" y="165.61" width="1.2" height="1.6" fill="#646464"/><rect x="46.93" y="157.68" width="1.2" height="1.6" fill="#646464"/><rect x="46.93" y="149.75" width="1.2" height="1.6" fill="#646464"/><rect x="46.93" y="141.82" width="1.2" height="1.6" fill="#646464"/><rect x="46.93" y="133.89" width="1.2" height="1.6" fill="#646464"/><rect x="46.93" y="125.96" width="1.2" height="1.6" fill="#646464"/><rect x="46.93" y="118.03" width="1.2" height="1.6" fill="#646464"/><rect x="46.93" y="110.10" width="1.2" height="1.6" fill="#646464"/><rect x="46.93" y="102.17" width="1.2" height="1.6" fill="#646464"/><rect x="46.93" y="94.24" width="1.2" height="1.6" fill="#646464"/><rect x="46.93" y="86.31" width="1.2" height="1.6" fill="#646464"/><rect x="46.93" y="78.38" width="1.2" height="1.6" fill="#646464"/><rect x="46.93" y="70.45" width="1.2" height="1.6" fill="#646464"/><rect x="46.93" y="62.52" width="1.2" height="1.6" fill="#646464"/><rect x="46.93" y="54.59" width="1.2" height="1.6" fill="#646464"/><rect x="46.93" y="46.66" width="1.2" height="1.6" fill="#646464"/><rect x="46.93" y="38.73" width="1.2" height="1.6" fill="#646464"/><rect x="46.93" y="30.80" width="1.2" height="1.6" fill="#646464"/><rect x="46.93" y="22.87" width="1.2" height="1.6" fill="#646464"/><rect x="46.93" y="14.94" width="1.2" height="1.6" fill="#646464"/><rect x="46.93" y="7.01" width="1.2" height="1.6" fill="#646464"/><rect x="54.86" y="221.12" width="1.2" height="1.6" fill="#646464"/><rect x="54.86" y="213.19" width="1.2" height="1.6" fill="#646464"/><rect x="54.86" y="205.26" width="1.2" height="1.6" fill="#646464"/><rect x="54.86" y="197.33" width="1.2" height="1.6" fill="#646464"/><rect x="54.86" y="189.40" width="1.2" height="1.6" fill="#646464"/><rect x="54.86" y="181.47" width="1.2" height="1.6" fill="#646464"/><rect x="54.86" y="173.54" width="1.2" height="1.6" fill="#646464"/><rect x="54.86" y="165.61" width="1.2" height="1.6" fill="#646464"/><rect x="54.86" y="157.68" width="1.2" height="1.6" fill="#646464"/><rect x="54.86" y="149.75" width="1.2" height="1.6" fill="#646464"/><rect x="54.86" y="141.82" width="1.2" height="1.6" fill="#646464"/><rect x="54.86" y="133.89" width="1.2" height="1.6" fill="#646464"/><rect x="54.86" y="125.96" width="1.2" height="1.6" fill="#646464"/><rect x="54.86" y="118.03" width="1.2" height="1.6" fill="#646464"/><rect x="54.86" y="110.10" width="1.2" height="1.6" fill="#646464"/><rect x="54.86" y="102.17" width="1.2" height="1.6" fill="#646464"/><rect x="54.86" y="94.24" width="1.2" height="1.6" fill="#646464"/><rect x="54.86" y="86.31" width="1.2" height="1.6" fill="#646464"/><rect x="54.86" y="78.38" width="1.2" height="1.6" fill="#646464"/><rect x="54.86" y="70.45" width="1.2" height="1.6" fill="#646464"/><rect x="54.86" y="62.52" width="1.2" height="1.6" fill="#646464"/><rect x="54.86" y="54.59" width="1.2" height="1.6" fill="#646464"/><rect x="54.86" y="46.66" width="1.2" height="1.6" fill="#646464"/><rect x="54.86" y="38.73" width="1.2" height="1.6" fill="#646464"/><rect x="54.86" y="30.80" width="1.2" height="1.6" fill="#646464"/><rect x="54.86" y="22.87" width="1.2" height="1.6" fill="#646464"/><rect x="54.86" y="14.94" width="1.2" height="1.6" fill="#646464"/><rect x="54.86" y="7.01" width="1.2" height="1.6" fill="#646464"/><rect x="62.79" y="221.12" width="1.2" height="1.6" fill="#646464"/><rect x="62.79" y="213.19" width="1.2" height="1.6" fill="#646464"/><rect x="62.79" y="205.26" width="1.2" height="1.6" fill="#646464"/><rect x="62.79" y="197.33" width="1.2" height="1.6" fill="#646464"/><rect x="62.79" y="189.40" width="1.2" height="1.6" fill="#646464"/><rect x="62.79" y="181.47" width="1.2" height="1.6" fill="#646464"/><rect x="62.79" y="173.54" width="1.2" height="1.6" fill="#646464"/><rect x="62.79" y="165.61" width="1.2" height="1.6" fill="#646464"/><rect x="62.79" y="157.68" width="1.2" height="1.6" fill="#646464"/><rect x="62.79" y="149.75" width="1.2" height="1.6" fill="#646464"/><rect x="62.79" y="141.82" width="1.2" height="1.6" fill="#646464"/><rect x="62.79" y="133.89" width="1.2" height="1.6" fill="#646464"/><rect x="62.79" y="125.96" width="1.2" height="1.6" fill="#646464"/><rect x="62.79" y="118.03" width="1.2" height="1.6" fill="#646464"/><rect x="62.79" y="110.10" width="1.2" height="1.6" fill="#646464"/><rect x="62.79" y="102.17" width="1.2" height="1.6" fill="#646464"/><rect x="62.79" y="94.24" width="1.2" height="1.6" fill="#646464"/><rect x="62.79" y="86.31" width="1.2" height="1.6" fill="#646464"/><rect x="62.79" y="78.38" width="1.2" height="1.6" fill="#646464"/><rect x="62.79" y="70.45" width="1.2" height="1.6" fill="#646464"/><rect x="62.79" y="62.52" width="1.2" height="1.6" fill="#646464"/><rect x="62.79" y="54.59" width="1.2" height="1.6" fill="#646464"/><rect x="62.79" y="46.66" width="1.2" height="1.6" fill="#646464"/><rect x="62.79" y="38.73" width="1.2" height="1.6" fill="#646464"/><rect x="62.79" y="30.80" width="1.2" height="1.6" fill="#646464"/><rect x="62.79" y="22.87" width="1.2" height="1.6" fill="#646464"/><rect x="62.79" y="14.94" width="1.2" height="1.6" fill="#646464"/><rect x="62.79" y="7.01" width="1.2" height="1.6" fill="#646464"/><rect x="70.72" y="221.12" width="1.2" height="1.6" fill="#646464"/><rect x="70.72" y="213.19" width="1.2" height="1.6" fill="#646464"/><rect x="70.72" y="205.26" width="1.2" height="1.6" fill="#646464"/><rect x="70.72" y="197.33" width="1.2" height="1.6" fill="#646464"/><rect x="70.72" y="189.40" width="1.2" height="1.6" fill="#646464"/><rect x="70.72" y="181.47" width="1.2" height="1.6" fill="#646464"/><rect x="70.72" y="173.54" width="1.2" height="1.6" fill="#646464"/><rect x="70.72" y="165.61" width="1.2" height="1.6" fill="#646464"/><rect x="70.72" y="157.68" width="1.2" height="1.6" fill="#646464"/><rect x="70.72" y="149.75" width="1.2" height="1.6" fill="#646464"/><rect x="70.72" y="141.82" width="1.2" height="1.6" fill="#646464"/><rect x="70.72" y="133.89" width="1.2" height="1.6" fill="#646464"/><rect x="70.72" y="125.96" width="1.2" height="1.6" fill="#646464"/><rect x="70.72" y="118.03" width="1.2" height="1.6" fill="#646464"/><rect x="70.72" y="110.10" width="1.2" height="1.6" fill="#646464"/><rect x="70.72" y="102.17" width="1.2" height="1.6" fill="#646464"/><rect x="70.72" y="94.24" width="1.2" height="1.6" fill="#646464"/><rect x="70.72" y="86.31" width="1.2" height="1.6" fill="#646464"/><rect x="70.72" y="78.38" width="1.2" height="1.6" fill="#646464"/><rect x="70.72" y="70.45" width="1.2" height="1.6" fill="#646464"/><rect x="70.72" y="62.52" width="1.2" height="1.6" fill="#646464"/><rect x="70.72" y="54.59" width="1.2" height="1.6" fill="#646464"/><rect x="70.72" y="46.66" width="1.2" height="1.6" fill="#646464"/><rect x="70.72" y="38.73" width="1.2" height="1.6" fill="#646464"/><rect x="70.72" y="30.80" width="1.2" height="1.6" fill="#646464"/><rect x="70.72" y="22.87" width="1.2" height="1.6" fill="#646464"/><rect x="70.72" y="14.94" width="1.2" height="1.6" fill="#646464"/><rect x="70.72" y="7.01" width="1.2" height="1.6" fill="#646464"/><rect x="78.65" y="221.12" width="1.2" height="1.6" fill="#646464"/><rect x="78.65" y="213.19" width="1.2" height="1.6" fill="#646464"/><rect x="78.65" y="205.26" width="1.2" height="1.6" fill="#646464"/><rect x="78.65" y="197.33" width="1.2" height="1.6" fill="#646464"/><rect x="78.65" y="189.40" width="1.2" height="1.6" fill="#646464"/><rect x="78.65" y="181.47" width="1.2" height="1.6" fill="#646464"/><rect x="78.65" y="173.54" width="1.2" height="1.6" fill="#646464"/><rect x="78.65" y="165.61" width="1.2" height="1.6" fill="#646464"/><rect x="78.65" y="157.68" width="1.2" height="1.6" fill="#646464"/><rect x="78.65" y="149.75" width="1.2" height="1.6" fill="#646464"/><rect x="78.65" y="141.82" width="1.2" height="1.6" fill="#646464"/><rect x="78.65" y="133.89" width="1.2" height="1.6" fill="#646464"/><rect x="78.65" y="125.96" width="1.2" height="1.6" fill="#646464"/><rect x="78.65" y="118.03" width="1.2" height="1.6" fill="#646464"/><rect x="78.65" y="110.10" width="1.2" height="1.6" fill="#646464"/><rect x="78.65" y="102.17" width="1.2" height="1.6" fill="#646464"/><rect x="78.65" y="94.24" width="1.2" height="1.6" fill="#646464"/><rect x="78.65" y="86.31" width="1.2" height="1.6" fill="#646464"/><rect x="78.65" y="78.38" width="1.2" height="1.6" fill="#646464"/><rect x="78.65" y="70.45" width="1.2" height="1.6" fill="#646464"/><rect x="78.65" y="62.52" width="1.2" height="1.6" fill="#646464"/><rect x="78.65" y="54.59" width="1.2" height="1.6" fill="#646464"/><rect x="78.65" y="46.66" width="1.2" height="1.6" fill="#646464"/><rect x="78.65" y="38.73" width="1.2" height="1.6" fill="#646464"/><rect x="78.65" y="30.80" width="1.2" height="1.6" fill="#646464"/><rect x="78.65" y="22.87" width="1.2" height="1.6" fill="#646464"/><rect x="78.65" y="14.94" width="1.2" height="1.6" fill="#646464"/><rect x="78.65" y="7.01" width="1.2" height="1.6" fill="#646464"/><rect x="86.58" y="221.12" width="1.2" height="1.6" fill="#646464"/><rect x="86.58" y="213.19" width="1.2" height="1.6" fill="#646464"/><rect x="86.58" y="205.26" width="1.2" height="1.6" fill="#646464"/><rect x="86.58" y="197.33" width="1.2" height="1.6" fill="#646464"/><rect x="86.58" y="189.40" width="1.2" height="1.6" fill="#646464"/><rect x="86.58" y="181.47" width="1.2" height="1.6" fill="#646464"/><rect x="86.58" y="173.54" width="1.2" height="1.6" fill="#646464"/><rect x="86.58" y="165.61" width="1.2" height="1.6" fill="#646464"/><rect x="86.58" y="157.68" width="1.2" height="1.6" fill="#646464"/><rect x="86.58" y="149.75" width="1.2" height="1.6" fill="#646464"/><rect x="86.58" y="141.82" width="1.2" height="1.6" fill="#646464"/><rect x="86.58" y="133.89" width="1.2" height="1.6" fill="#646464"/><rect x="86.58" y="125.96" width="1.2" height="1.6" fill="#646464"/><rect x="86.58" y="118.03" width="1.2" height="1.6" fill="#646464"/><rect x="86.58" y="110.10" width="1.2" height="1.6" fill="#646464"/><rect x="86.58" y="102.17" width="1.2" height="1.6" fill="#646464"/><rect x="86.58" y="94.24" width="1.2" height="1.6" fill="#646464"/><rect x="86.58" y="86.31" width="1.2" height="1.6" fill="#646464"/><rect x="86.58" y="78.38" width="1.2" height="1.6" fill="#646464"/><rect x="86.58" y="70.45" width="1.2" height="1.6" fill="#646464"/><rect x="86.58" y="62.52" width="1.2" height="1.6" fill="#646464"/><rect x="86.58" y="54.59" width="1.2" height="1.6" fill="#646464"/><rect x="86.58" y="46.66" width="1.2" height="1.6" fill="#646464"/><rect x="86.58" y="38.73" width="1.2" height="1.6" fill="#646464"/><rect x="86.58" y="30.80" width="1.2" height="1.6" fill="#646464"/><rect x="86.58" y="22.87" width="1.2" height="1.6" fill="#646464"/><rect x="86.58" y="14.94" width="1.2" height="1.6" fill="#646464"/><rect x="86.58" y="7.01" width="1.2" height="1.6" fill="#646464"/><rect x="94.51" y="221.12" width="1.2" height="1.6" fill="#646464"/><rect x="94.51" y="213.19" width="1.2" height="1.6" fill="#646464"/><rect x="94.51" y="205.26" width="1.2" height="1.6" fill="#646464"/><rect x="94.51" y="197.33" width="1.2" height="1.6" fill="#646464"/><rect x="94.51" y="189.40" width="1.2" height="1.6" fill="#646464"/><rect x="94.51" y="181.47" width="1.2" height="1.6" fill="#646464"/><rect x="94.51" y="173.54" width="1.2" height="1.6" fill="#646464"/><rect x="94.51" y="165.61" width="1.2" height="1.6" fill="#646464"/><rect x="94.51" y="157.68" width="1.2" height="1.6" fill="#646464"/><rect x="94.51" y="149.75" width="1.2" height="1.6" fill="#646464"/><rect x="94.51" y="141.82" width="1.2" height="1.6" fill="#646464"/><rect x="94.51" y="133.89" width="1.2" height="1.6" fill="#646464"/><rect x="94.51" y="125.96" width="1.2" height="1.6" fill="#646464"/><rect x="94.51" y="118.03" width="1.2" height="1.6" fill="#646464"/><rect x="94.51" y="110.10" width="1.2" height="1.6" fill="#646464"/><rect x="94.51" y="102.17" width="1.2" height="1.6" fill="#646464"/><rect x="94.51" y="94.24" width="1.2" height="1.6" fill="#646464"/><rect x="94.51" y="86.31" width="1.2" height="1.6" fill="#646464"/><rect x="94.51" y="78.38" width="1.2" height="1.6" fill="#646464"/><rect x="94.51" y="70.45" width="1.2" height="1.6" fill="#646464"/><rect x="94.51" y="62.52" width="1.2" height="1.6" fill="#646464"/><rect x="94.51" y="54.59" width="1.2" height="1.6" fill="#646464"/><rect x="94.51" y="46.66" width="1.2" height="1.6" fill="#646464"/><rect x="94.51" y="38.73" width="1.2" height="1.6" fill="#646464"/><rect x="94.51" y="30.80" width="1.2" height="1.6" fill="#646464"/><rect x="94.51" y="22.87" width="1.2" height="1.6" fill="#646464"/><rect x="94.51" y="14.94" width="1.2" height="1.6" fill="#646464"/><rect x="94.51" y="7.01" width="1.2" height="1.6" fill="#646464"/><rect x="102.44" y="221.12" width="1.2" height="1.6" fill="#646464"/><rect x="102.44" y="213.19" width="1.2" height="1.6" fill="#646464"/><rect x="102.44" y="205.26" width="1.2" height="1.6" fill="#646464"/><rect x="102.44" y="197.33" width="1.2" height="1.6" fill="#646464"/><rect x="102.44" y="189.40" width="1.2" height="1.6" fill="#646464"/><rect x="102.44" y="181.47" width="1.2" height="1.6" fill="#646464"/><rect x="102.44" y="173.54" width="1.2" height="1.6" fill="#646464"/><rect x="102.44" y="165.61" width="1.2" height="1.6" fill="#646464"/><rect x="102.44" y="157.68" width="1.2" height="1.6" fill="#646464"/><rect x="102.44" y="149.75" width="1.2" height="1.6" fill="#646464"/><rect x="102.44" y="141.82" width="1.2" height="1.6" fill="#646464"/><rect x="102.44" y="133.89" width="1.2" height="1.6" fill="#646464"/><rect x="102.44" y="125.96" width="1.2" height="1.6" fill="#646464"/><rect x="102.44" y="118.03" width="1.2" height="1.6" fill="#646464"/><rect x="102.44" y="110.10" width="1.2" height="1.6" fill="#646464"/><rect x="102.44" y="102.17" width="1.2" height="1.6" fill="#646464"/><rect x="102.44" y="94.24" width="1.2" height="1.6" fill="#646464"/><rect x="102.44" y="86.31" width="1.2" height="1.6" fill="#646464"/><rect x="102.44" y="78.38" width="1.2" height="1.6" fill="#646464"/><rect x="102.44" y="70.45" width="1.2" height="1.6" fill="#646464"/><rect x="102.44" y="62.52" width="1.2" height="1.6" fill="#646464"/><rect x="102.44" y="54.59" width="1.2" height="1.6" fill="#646464"/><rect x="102.44" y="46.66" width="1.2" height="1.6" fill="#646464"/><rect x="102.44" y="38.73" width="1.2" height="1.6" fill="#646464"/><rect x="102.44" y="30.80" width="1.2" height="1.6" fill="#646464"/><rect x="102.44" y="22.87" width="1.2" height="1.6" fill="#646464"/><rect x="102.44" y="14.94" width="1.2" height="1.6" fill="#646464"/><rect x="102.44" y="7.01" width="1.2" height="1.6" fill="#646464"/><rect x="110.37" y="221.12" width="1.2" height="1.6" fill="#646464"/><rect x="110.37" y="213.19" width="1.2" height="1.6" fill="#646464"/><rect x="110.37" y="205.26" width="1.2" height="1.6" fill="#646464"/><rect x="110.37" y="197.33" width="1.2" height="1.6" fill="#646464"/><rect x="110.37" y="189.40" width="1.2" height="1.6" fill="#646464"/><rect x="110.37" y="181.47" width="1.2" height="1.6" fill="#646464"/><rect x="110.37" y="173.54" width="1.2" height="1.6" fill="#646464"/><rect x="110.37" y="165.61" width="1.2" height="1.6" fill="#646464"/><rect x="110.37" y="157.68" width="1.2" height="1.6" fill="#646464"/><rect x="110.37" y="149.75" width="1.2" height="1.6" fill="#646464"/><rect x="110.37" y="141.82" width="1.2" height="1.6" fill="#646464"/><rect x="110.37" y="133.89" width="1.2" height="1.6" fill="#646464"/><rect x="110.37" y="125.96" width="1.2" height="1.6" fill="#646464"/><rect x="110.37" y="118.03" width="1.2" height="1.6" fill="#646464"/><rect x="110.37" y="110.10" width="1.2" height="1.6" fill="#646464"/><rect x="110.37" y="102.17" width="1.2" height="1.6" fill="#646464"/><rect x="110.37" y="94.24" width="1.2" height="1.6" fill="#646464"/><rect x="110.37" y="86.31" width="1.2" height="1.6" fill="#646464"/><rect x="110.37" y="78.38" width="1.2" height="1.6" fill="#646464"/><rect x="110.37" y="70.45" width="1.2" height="1.6" fill="#646464"/><rect x="110.37" y="62.52" width="1.2" height="1.6" fill="#646464"/><rect x="110.37" y="54.59" width="1.2" height="1.6" fill="#646464"/><rect x="110.37" y="46.66" width="1.2" height="1.6" fill="#646464"/><rect x="110.37" y="38.73" width="1.2" height="1.6" fill="#646464"/><rect x="110.37" y="30.80" width="1.2" height="1.6" fill="#646464"/><rect x="110.37" y="22.87" width="1.2" height="1.6" fill="#646464"/><rect x="110.37" y="14.94" width="1.2" height="1.6" fill="#646464"/><rect x="110.37" y="7.01" width="1.2" height="1.6" fill="#646464"/><rect x="118.30" y="221.12" width="1.2" height="1.6" fill="#646464"/><rect x="118.30" y="213.19" width="1.2" height="1.6" fill="#646464"/><rect x="118.30" y="205.26" width="1.2" height="1.6" fill="#646464"/><rect x="118.30" y="197.33" width="1.2" height="1.6" fill="#646464"/><rect x="118.30" y="189.40" width="1.2" height="1.6" fill="#646464"/><rect x="118.30" y="181.47" width="1.2" height="1.6" fill="#646464"/><rect x="118.30" y="173.54" width="1.2" height="1.6" fill="#646464"/><rect x="118.30" y="165.61" width="1.2" height="1.6" fill="#646464"/><rect x="118.30" y="157.68" width="1.2" height="1.6" fill="#646464"/><rect x="118.30" y="149.75" width="1.2" height="1.6" fill="#646464"/><rect x="118.30" y="141.82" width="1.2" height="1.6" fill="#646464"/><rect x="118.30" y="133.89" width="1.2" height="1.6" fill="#646464"/><rect x="118.30" y="125.96" width="1.2" height="1.6" fill="#646464"/><rect x="118.30" y="118.03" width="1.2" height="1.6" fill="#646464"/><rect x="118.30" y="110.10" width="1.2" height="1.6" fill="#646464"/><rect x="118.30" y="102.17" width="1.2" height="1.6" fill="#646464"/><rect x="118.30" y="94.24" width="1.2" height="1.6" fill="#646464"/><rect x="118.30" y="86.31" width="1.2" height="1.6" fill="#646464"/><rect x="118.30" y="78.38" width="1.2" height="1.6" fill="#646464"/><rect x="118.30" y="70.45" width="1.2" height="1.6" fill="#646464"/><rect x="118.30" y="62.52" width="1.2" height="1.6" fill="#646464"/><rect x="118.30" y="54.59" width="1.2" height="1.6" fill="#646464"/><rect x="118.30" y="46.66" width="1.2" height="1.6" fill="#646464"/><rect x="118.30" y="38.73" width="1.2" height="1.6" fill="#646464"/><rect x="118.30" y="30.80" width="1.2" height="1.6" fill="#646464"/><rect x="118.30" y="22.87" width="1.2" height="1.6" fill="#646464"/><rect x="118.30" y="14.94" width="1.2" height="1.6" fill="#646464"/><rect x="118.30" y="7.01" width="1.2" height="1.6" fill="#646464"/><rect x="126.23" y="221.12" width="1.2" height="1.6" fill="#646464"/><rect x="126.23" y="213.19" width="1.2" height="1.6" fill="#646464"/><rect x="126.23" y="205.26" width="1.2" height="1.6" fill="#646464"/><rect x="126.23" y="197.33" width="1.2" height="1.6" fill="#646464"/><rect x="126.23" y="189.40" width="1.2" height="1.6" fill="#646464"/><rect x="126.23" y="181.47" width="1.2" height="1.6" fill="#646464"/><rect x="126.23" y="173.54" width="1.2" height="1.6" fill="#646464"/><rect x="126.23" y="165.61" width="1.2" height="1.6" fill="#646464"/><rect x="126.23" y="157.68" width="1.2" height="1.6" fill="#646464"/><rect x="126.23" y="149.75" width="1.2" height="1.6" fill="#646464"/><rect x="126.23" y="141.82" width="1.2" height="1.6" fill="#646464"/><rect x="126.23" y="133.89" width="1.2" height="1.6" fill="#646464"/><rect x="126.23" y="125.96" width="1.2" height="1.6" fill="#646464"/><rect x="126.23" y="118.03" width="1.2" height="1.6" fill="#646464"/><rect x="126.23" y="110.10" width="1.2" height="1.6" fill="#646464"/><rect x="126.23" y="102.17" width="1.2" height="1.6" fill="#646464"/><rect x="126.23" y="94.24" width="1.2" height="1.6" fill="#646464"/><rect x="126.23" y="86.31" width="1.2" height="1.6" fill="#646464"/><rect x="126.23" y="78.38" width="1.2" height="1.6" fill="#646464"/><rect x="126.23" y="70.45" width="1.2" height="1.6" fill="#646464"/><rect x="126.23" y="62.52" width="1.2" height="1.6" fill="#646464"/><rect x="126.23" y="54.59" width="1.2" height="1.6" fill="#646464"/><rect x="126.23" y="46.66" width="1.2" height="1.6" fill="#646464"/><rect x="126.23" y="38.73" width="1.2" height="1.6" fill="#646464"/><rect x="126.23" y="30.80" width="1.2" height="1.6" fill="#646464"/><rect x="126.23" y="22.87" width="1.2" height="1.6" fill="#646464"/><rect x="126.23" y="14.94" width="1.2" height="1.6" fill="#646464"/><rect x="126.23" y="7.01" width="1.2" height="1.6" fill="#646464"/><rect x="134.16" y="221.12" width="1.2" height="1.6" fill="#646464"/><rect x="134.16" y="213.19" width="1.2" height="1.6" fill="#646464"/><rect x="134.16" y="205.26" width="1.2" height="1.6" fill="#646464"/><rect x="134.16" y="197.33" width="1.2" height="1.6" fill="#646464"/><rect x="134.16" y="189.40" width="1.2" height="1.6" fill="#646464"/><rect x="134.16" y="181.47" width="1.2" height="1.6" fill="#646464"/><rect x="134.16" y="173.54" width="1.2" height="1.6" fill="#646464"/><rect x="134.16" y="165.61" width="1.2" height="1.6" fill="#646464"/><rect x="134.16" y="157.68" width="1.2" height="1.6" fill="#646464"/><rect x="134.16" y="149.75" width="1.2" height="1.6" fill="#646464"/><rect x="134.16" y="141.82" width="1.2" height="1.6" fill="#646464"/><rect x="134.16" y="133.89" width="1.2" height="1.6" fill="#646464"/><rect x="134.16" y="125.96" width="1.2" height="1.6" fill="#646464"/><rect x="134.16" y="118.03" width="1.2" height="1.6" fill="#646464"/><rect x="134.16" y="110.10" width="1.2" height="1.6" fill="#646464"/><rect x="134.16" y="102.17" width="1.2" height="1.6" fill="#646464"/><rect x="134.16" y="94.24" width="1.2" height="1.6" fill="#646464"/><rect x="134.16" y="86.31" width="1.2" height="1.6" fill="#646464"/><rect x="134.16" y="78.38" width="1.2" height="1.6" fill="#646464"/><rect x="134.16" y="70.45" width="1.2" height="1.6" fill="#646464"/><rect x="134.16" y="62.52" width="1.2" height="1.6" fill="#646464"/><rect x="134.16" y="54.59" width="1.2" height="1.6" fill="#646464"/><rect x="134.16" y="46.66" width="1.2" height="1.6" fill="#646464"/><rect x="134.16" y="38.73" width="1.2" height="1.6" fill="#646464"/><rect x="134.16" y="30.80" width="1.2" height="1.6" fill="#646464"/><rect x="134.16" y="22.87" width="1.2" height="1.6" fill="#646464"/><rect x="134.16" y="14.94" width="1.2" height="1.6" fill="#646464"/><rect x="134.16" y="7.01" width="1.2" height="1.6" fill="#646464"/><rect x="142.09" y="221.12" width="1.2" height="1.6" fill="#646464"/><rect x="142.09" y="213.19" width="1.2" height="1.6" fill="#646464"/><rect x="142.09" y="205.26" width="1.2" height="1.6" fill="#646464"/><rect x="142.09" y="197.33" width="1.2" height="1.6" fill="#646464"/><rect x="142.09" y="189.40" width="1.2" height="1.6" fill="#646464"/><rect x="142.09" y="181.47" width="1.2" height="1.6" fill="#646464"/><rect x="142.09" y="173.54" width="1.2" height="1.6" fill="#646464"/><rect x="142.09" y="165.61" width="1.2" height="1.6" fill="#646464"/><rect x="142.09" y="157.68" width="1.2" height="1.6" fill="#646464"/><rect x="142.09" y="149.75" width="1.2" height="1.6" fill="#646464"/><rect x="142.09" y="141.82" width="1.2" height="1.6" fill="#646464"/><rect x="142.09" y="133.89" width="1.2" height="1.6" fill="#646464"/><rect x="142.09" y="125.96" width="1.2" height="1.6" fill="#646464"/><rect x="142.09" y="118.03" width="1.2" height="1.6" fill="#646464"/><rect x="142.09" y="110.10" width="1.2" height="1.6" fill="#646464"/><rect x="142.09" y="102.17" width="1.2" height="1.6" fill="#646464"/><rect x="142.09" y="94.24" width="1.2" height="1.6" fill="#646464"/><rect x="142.09" y="86.31" width="1.2" height="1.6" fill="#646464"/><rect x="142.09" y="78.38" width="1.2" height="1.6" fill="#646464"/><rect x="142.09" y="70.45" width="1.2" height="1.6" fill="#646464"/><rect x="142.09" y="62.52" width="1.2" height="1.6" fill="#646464"/><rect x="142.09" y="54.59" width="1.2" height="1.6" fill="#646464"/><rect x="142.09" y="46.66" width="1.2" height="1.6" fill="#646464"/><rect x="142.09" y="38.73" width="1.2" height="1.6" fill="#646464"/><rect x="142.09" y="30.80" width="1.2" height="1.6" fill="#646464"/><rect x="142.09" y="22.87" width="1.2" height="1.6" fill="#646464"/><rect x="142.09" y="14.94" width="1.2" height="1.6" fill="#646464"/><rect x="142.09" y="7.01" width="1.2" height="1.6" fill="#646464"/><rect x="150.02" y="221.12" width="1.2" height="1.6" fill="#646464"/><rect x="150.02" y="213.19" width="1.2" height="1.6" fill="#646464"/><rect x="150.02" y="205.26" width="1.2" height="1.6" fill="#646464"/><rect x="150.02" y="197.33" width="1.2" height="1.6" fill="#646464"/><rect x="150.02" y="189.40" width="1.2" height="1.6" fill="#646464"/><rect x="150.02" y="181.47" width="1.2" height="1.6" fill="#646464"/><rect x="150.02" y="173.54" width="1.2" height="1.6" fill="#646464"/><rect x="150.02" y="165.61" width="1.2" height="1.6" fill="#646464"/><rect x="150.02" y="157.68" width="1.2" height="1.6" fill="#646464"/><rect x="150.02" y="149.75" width="1.2" height="1.6" fill="#646464"/><rect x="150.02" y="141.82" width="1.2" height="1.6" fill="#646464"/><rect x="150.02" y="133.89" width="1.2" height="1.6" fill="#646464"/><rect x="150.02" y="125.96" width="1.2" height="1.6" fill="#646464"/><rect x="150.02" y="118.03" width="1.2" height="1.6" fill="#646464"/><rect x="150.02" y="110.10" width="1.2" height="1.6" fill="#646464"/><rect x="150.02" y="102.17" width="1.2" height="1.6" fill="#646464"/><rect x="150.02" y="94.24" width="1.2" height="1.6" fill="#646464"/><rect x="150.02" y="86.31" width="1.2" height="1.6" fill="#646464"/><rect x="150.02" y="78.38" width="1.2" height="1.6" fill="#646464"/><rect x="150.02" y="70.45" width="1.2" height="1.6" fill="#646464"/><rect x="150.02" y="62.52" width="1.2" height="1.6" fill="#646464"/><rect x="150.02" y="54.59" width="1.2" height="1.6" fill="#646464"/><rect x="150.02" y="46.66" width="1.2" height="1.6" fill="#646464"/><rect x="150.02" y="38.73" width="1.2" height="1.6" fill="#646464"/><rect x="150.02" y="30.80" width="1.2" height="1.6" fill="#646464"/><rect x="150.02" y="22.87" width="1.2" height="1.6" fill="#646464"/><rect x="150.02" y="14.94" width="1.2" height="1.6" fill="#646464"/><rect x="150.02" y="7.01" width="1.2" height="1.6" fill="#646464"/><rect x="157.95" y="221.12" width="1.2" height="1.6" fill="#646464"/><rect x="157.95" y="213.19" width="1.2" height="1.6" fill="#646464"/><rect x="157.95" y="205.26" width="1.2" height="1.6" fill="#646464"/><rect x="157.95" y="197.33" width="1.2" height="1.6" fill="#646464"/><rect x="157.95" y="189.40" width="1.2" height="1.6" fill="#646464"/><rect x="157.95" y="181.47" width="1.2" height="1.6" fill="#646464"/><rect x="157.95" y="173.54" width="1.2" height="1.6" fill="#646464"/><rect x="157.95" y="165.61" width="1.2" height="1.6" fill="#646464"/><rect x="157.95" y="157.68" width="1.2" height="1.6" fill="#646464"/><rect x="157.95" y="149.75" width="1.2" height="1.6" fill="#646464"/><rect x="157.95" y="141.82" width="1.2" height="1.6" fill="#646464"/><rect x="157.95" y="133.89" width="1.2" height="1.6" fill="#646464"/><rect x="157.95" y="125.96" width="1.2" height="1.6" fill="#646464"/><rect x="157.95" y="118.03" width="1.2" height="1.6" fill="#646464"/><rect x="157.95" y="110.10" width="1.2" height="1.6" fill="#646464"/><rect x="157.95" y="102.17" width="1.2" height="1.6" fill="#646464"/><rect x="157.95" y="94.24" width="1.2" height="1.6" fill="#646464"/><rect x="157.95" y="86.31" width="1.2" height="1.6" fill="#646464"/><rect x="157.95" y="78.38" width="1.2" height="1.6" fill="#646464"/><rect x="157.95" y="70.45" width="1.2" height="1.6" fill="#646464"/><rect x="157.95" y="62.52" width="1.2" height="1.6" fill="#646464"/><rect x="157.95" y="54.59" width="1.2" height="1.6" fill="#646464"/><rect x="157.95" y="46.66" width="1.2" height="1.6" fill="#646464"/><rect x="157.95" y="38.73" width="1.2" height="1.6" fill="#646464"/><rect x="157.95" y="30.80" width="1.2" height="1.6" fill="#646464"/><rect x="157.95" y="22.87" width="1.2" height="1.6" fill="#646464"/><rect x="157.95" y="14.94" width="1.2" height="1.6" fill="#646464"/><rect x="157.95" y="7.01" width="1.2" height="1.6" fill="#646464"/><rect x="165.88" y="221.12" width="1.2" height="1.6" fill="#646464"/><rect x="165.88" y="213.19" width="1.2" height="1.6" fill="#646464"/><rect x="165.88" y="205.26" width="1.2" height="1.6" fill="#646464"/><rect x="165.88" y="197.33" width="1.2" height="1.6" fill="#646464"/><rect x="165.88" y="189.40" width="1.2" height="1.6" fill="#646464"/><rect x="165.88" y="181.47" width="1.2" height="1.6" fill="#646464"/><rect x="165.88" y="173.54" width="1.2" height="1.6" fill="#646464"/><rect x="165.88" y="165.61" width="1.2" height="1.6" fill="#646464"/><rect x="165.88" y="157.68" width="1.2" height="1.6" fill="#646464"/><rect x="165.88" y="149.75" width="1.2" height="1.6" fill="#646464"/><rect x="165.88" y="141.82" width="1.2" height="1.6" fill="#646464"/><rect x="165.88" y="133.89" width="1.2" height="1.6" fill="#646464"/><rect x="165.88" y="125.96" width="1.2" height="1.6" fill="#646464"/><rect x="165.88" y="118.03" width="1.2" height="1.6" fill="#646464"/><rect x="165.88" y="110.10" width="1.2" height="1.6" fill="#646464"/><rect x="165.88" y="102.17" width="1.2" height="1.6" fill="#646464"/><rect x="165.88" y="94.24" width="1.2" height="1.6" fill="#646464"/><rect x="165.88" y="86.31" width="1.2" height="1.6" fill="#646464"/><rect x="165.88" y="78.38" width="1.2" height="1.6" fill="#646464"/><rect x="165.88" y="70.45" width="1.2" height="1.6" fill="#646464"/><rect x="165.88" y="62.52" width="1.2" height="1.6" fill="#646464"/><rect x="165.88" y="54.59" width="1.2" height="1.6" fill="#646464"/><rect x="165.88" y="46.66" width="1.2" height="1.6" fill="#646464"/><rect x="165.88" y="38.73" width="1.2" height="1.6" fill="#646464"/><rect x="165.88" y="30.80" width="1.2" height="1.6" fill="#646464"/><rect x="165.88" y="22.87" width="1.2" height="1.6" fill="#646464"/><rect x="165.88" y="14.94" width="1.2" height="1.6" fill="#646464"/><rect x="165.88" y="7.01" width="1.2" height="1.6" fill="#646464"/><rect x="173.81" y="221.12" width="1.2" height="1.6" fill="#646464"/><rect x="173.81" y="213.19" width="1.2" height="1.6" fill="#646464"/><rect x="173.81" y="205.26" width="1.2" height="1.6" fill="#646464"/><rect x="173.81" y="197.33" width="1.2" height="1.6" fill="#646464"/><rect x="173.81" y="189.40" width="1.2" height="1.6" fill="#646464"/><rect x="173.81" y="181.47" width="1.2" height="1.6" fill="#646464"/><rect x="173.81" y="173.54" width="1.2" height="1.6" fill="#646464"/><rect x="173.81" y="165.61" width="1.2" height="1.6" fill="#646464"/><rect x="173.81" y="157.68" width="1.2" height="1.6" fill="#646464"/><rect x="173.81" y="149.75" width="1.2" height="1.6" fill="#646464"/><rect x="173.81" y="141.82" width="1.2" height="1.6" fill="#646464"/><rect x="173.81" y="133.89" width="1.2" height="1.6" fill="#646464"/><rect x="173.81" y="125.96" width="1.2" height="1.6" fill="#646464"/><rect x="173.81" y="118.03" width="1.2" height="1.6" fill="#646464"/><rect x="173.81" y="110.10" width="1.2" height="1.6" fill="#646464"/><rect x="173.81" y="102.17" width="1.2" height="1.6" fill="#646464"/><rect x="173.81" y="94.24" width="1.2" height="1.6" fill="#646464"/><rect x="173.81" y="86.31" width="1.2" height="1.6" fill="#646464"/><rect x="173.81" y="78.38" width="1.2" height="1.6" fill="#646464"/><rect x="173.81" y="70.45" width="1.2" height="1.6" fill="#646464"/><rect x="173.81" y="62.52" width="1.2" height="1.6" fill="#646464"/><rect x="173.81" y="54.59" width="1.2" height="1.6" fill="#646464"/><rect x="173.81" y="46.66" width="1.2" height="1.6" fill="#646464"/><rect x="173.81" y="38.73" width="1.2" height="1.6" fill="#646464"/><rect x="173.81" y="30.80" width="1.2" height="1.6" fill="#646464"/><rect x="173.81" y="22.87" width="1.2" height="1.6" fill="#646464"/><rect x="173.81" y="14.94" width="1.2" height="1.6" fill="#646464"/><rect x="173.81" y="7.01" width="1.2" height="1.6" fill="#646464"/><rect x="181.74" y="221.12" width="1.2" height="1.6" fill="#646464"/><rect x="181.74" y="213.19" width="1.2" height="1.6" fill="#646464"/><rect x="181.74" y="205.26" width="1.2" height="1.6" fill="#646464"/><rect x="181.74" y="197.33" width="1.2" height="1.6" fill="#646464"/><rect x="181.74" y="189.40" width="1.2" height="1.6" fill="#646464"/><rect x="181.74" y="181.47" width="1.2" height="1.6" fill="#646464"/><rect x="181.74" y="173.54" width="1.2" height="1.6" fill="#646464"/><rect x="181.74" y="165.61" width="1.2" height="1.6" fill="#646464"/><rect x="181.74" y="157.68" width="1.2" height="1.6" fill="#646464"/><rect x="181.74" y="149.75" width="1.2" height="1.6" fill="#646464"/><rect x="181.74" y="141.82" width="1.2" height="1.6" fill="#646464"/><rect x="181.74" y="133.89" width="1.2" height="1.6" fill="#646464"/><rect x="181.74" y="125.96" width="1.2" height="1.6" fill="#646464"/><rect x="181.74" y="118.03" width="1.2" height="1.6" fill="#646464"/><rect x="181.74" y="110.10" width="1.2" height="1.6" fill="#646464"/><rect x="181.74" y="102.17" width="1.2" height="1.6" fill="#646464"/><rect x="181.74" y="94.24" width="1.2" height="1.6" fill="#646464"/><rect x="181.74" y="86.31" width="1.2" height="1.6" fill="#646464"/><rect x="181.74" y="78.38" width="1.2" height="1.6" fill="#646464"/><rect x="181.74" y="70.45" width="1.2" height="1.6" fill="#646464"/><rect x="181.74" y="62.52" width="1.2" height="1.6" fill="#646464"/><rect x="181.74" y="54.59" width="1.2" height="1.6" fill="#646464"/><rect x="181.74" y="46.66" width="1.2" height="1.6" fill="#646464"/><rect x="181.74" y="38.73" width="1.2" height="1.6" fill="#646464"/><rect x="181.74" y="30.80" width="1.2" height="1.6" fill="#646464"/><rect x="181.74" y="22.87" width="1.2" height="1.6" fill="#646464"/><rect x="181.74" y="14.94" width="1.2" height="1.6" fill="#646464"/><rect x="181.74" y="7.01" width="1.2" height="1.6" fill="#646464"/><rect x="189.67" y="221.12" width="1.2" height="1.6" fill="#646464"/><rect x="189.67" y="213.19" width="1.2" height="1.6" fill="#646464"/><rect x="189.67" y="205.26" width="1.2" height="1.6" fill="#646464"/><rect x="189.67" y="197.33" width="1.2" height="1.6" fill="#646464"/><rect x="189.67" y="189.40" width="1.2" height="1.6" fill="#646464"/><rect x="189.67" y="181.47" width="1.2" height="1.6" fill="#646464"/><rect x="189.67" y="173.54" width="1.2" height="1.6" fill="#646464"/><rect x="189.67" y="165.61" width="1.2" height="1.6" fill="#646464"/><rect x="189.67" y="157.68" width="1.2" height="1.6" fill="#646464"/><rect x="189.67" y="149.75" width="1.2" height="1.6" fill="#646464"/><rect x="189.67" y="141.82" width="1.2" height="1.6" fill="#646464"/><rect x="189.67" y="133.89" width="1.2" height="1.6" fill="#646464"/><rect x="189.67" y="125.96" width="1.2" height="1.6" fill="#646464"/><rect x="189.67" y="118.03" width="1.2" height="1.6" fill="#646464"/><rect x="189.67" y="110.10" width="1.2" height="1.6" fill="#646464"/><rect x="189.67" y="102.17" width="1.2" height="1.6" fill="#646464"/><rect x="189.67" y="94.24" width="1.2" height="1.6" fill="#646464"/><rect x="189.67" y="86.31" width="1.2" height="1.6" fill="#646464"/><rect x="189.67" y="78.38" width="1.2" height="1.6" fill="#646464"/><rect x="189.67" y="70.45" width="1.2" height="1.6" fill="#646464"/><rect x="189.67" y="62.52" width="1.2" height="1.6" fill="#646464"/><rect x="189.67" y="54.59" width="1.2" height="1.6" fill="#646464"/><rect x="189.67" y="46.66" width="1.2" height="1.6" fill="#646464"/><rect x="189.67" y="38.73" width="1.2" height="1.6" fill="#646464"/><rect x="189.67" y="30.80" width="1.2" height="1.6" fill="#646464"/><rect x="189.67" y="22.87" width="1.2" height="1.6" fill="#646464"/><rect x="189.67" y="14.94" width="1.2" height="1.6" fill="#646464"/><rect x="189.67" y="7.01" width="1.2" height="1.6" fill="#646464"/><rect x="197.60" y="221.12" width="1.2" height="1.6" fill="#646464"/><rect x="197.60" y="213.19" width="1.2" height="1.6" fill="#646464"/><rect x="197.60" y="205.26" width="1.2" height="1.6" fill="#646464"/><rect x="197.60" y="197.33" width="1.2" height="1.6" fill="#646464"/><rect x="197.60" y="189.40" width="1.2" height="1.6" fill="#646464"/><rect x="197.60" y="181.47" width="1.2" height="1.6" fill="#646464"/><rect x="197.60" y="173.54" width="1.2" height="1.6" fill="#646464"/><rect x="197.60" y="165.61" width="1.2" height="1.6" fill="#646464"/><rect x="197.60" y="157.68" width="1.2" height="1.6" fill="#646464"/><rect x="197.60" y="149.75" width="1.2" height="1.6" fill="#646464"/><rect x="197.60" y="141.82" width="1.2" height="1.6" fill="#646464"/><rect x="197.60" y="133.89" width="1.2" height="1.6" fill="#646464"/><rect x="197.60" y="125.96" width="1.2" height="1.6" fill="#646464"/><rect x="197.60" y="118.03" width="1.2" height="1.6" fill="#646464"/><rect x="197.60" y="110.10" width="1.2" height="1.6" fill="#646464"/><rect x="197.60" y="102.17" width="1.2" height="1.6" fill="#646464"/><rect x="197.60" y="94.24" width="1.2" height="1.6" fill="#646464"/><rect x="197.60" y="86.31" width="1.2" height="1.6" fill="#646464"/><rect x="197.60" y="78.38" width="1.2" height="1.6" fill="#646464"/><rect x="197.60" y="70.45" width="1.2" height="1.6" fill="#646464"/><rect x="197.60" y="62.52" width="1.2" height="1.6" fill="#646464"/><rect x="197.60" y="54.59" width="1.2" height="1.6" fill="#646464"/><rect x="197.60" y="46.66" width="1.2" height="1.6" fill="#646464"/><rect x="197.60" y="38.73" width="1.2" height="1.6" fill="#646464"/><rect x="197.60" y="30.80" width="1.2" height="1.6" fill="#646464"/><rect x="197.60" y="22.87" width="1.2" height="1.6" fill="#646464"/><rect x="197.60" y="14.94" width="1.2" height="1.6" fill="#646464"/><rect x="197.60" y="7.01" width="1.2" height="1.6" fill="#646464"/><rect x="205.53" y="221.12" width="1.2" height="1.6" fill="#646464"/><rect x="205.53" y="213.19" width="1.2" height="1.6" fill="#646464"/><rect x="205.53" y="205.26" width="1.2" height="1.6" fill="#646464"/><rect x="205.53" y="197.33" width="1.2" height="1.6" fill="#646464"/><rect x="205.53" y="189.40" width="1.2" height="1.6" fill="#646464"/><rect x="205.53" y="181.47" width="1.2" height="1.6" fill="#646464"/><rect x="205.53" y="173.54" width="1.2" height="1.6" fill="#646464"/><rect x="205.53" y="165.61" width="1.2" height="1.6" fill="#646464"/><rect x="205.53" y="157.68" width="1.2" height="1.6" fill="#646464"/><rect x="205.53" y="149.75" width="1.2" height="1.6" fill="#646464"/><rect x="205.53" y="141.82" width="1.2" height="1.6" fill="#646464"/><rect x="205.53" y="133.89" width="1.2" height="1.6" fill="#646464"/><rect x="205.53" y="125.96" width="1.2" height="1.6" fill="#646464"/><rect x="205.53" y="118.03" width="1.2" height="1.6" fill="#646464"/><rect x="205.53" y="110.10" width="1.2" height="1.6" fill="#646464"/><rect x="205.53" y="102.17" width="1.2" height="1.6" fill="#646464"/><rect x="205.53" y="94.24" width="1.2" height="1.6" fill="#646464"/><rect x="205.53" y="86.31" width="1.2" height="1.6" fill="#646464"/><rect x="205.53" y="78.38" width="1.2" height="1.6" fill="#646464"/><rect x="205.53" y="70.45" width="1.2" height="1.6" fill="#646464"/><rect x="205.53" y="62.52" width="1.2" height="1.6" fill="#646464"/><rect x="205.53" y="54.59" width="1.2" height="1.6" fill="#646464"/><rect x="205.53" y="46.66" width="1.2" height="1.6" fill="#646464"/><rect x="205.53" y="38.73" width="1.2" height="1.6" fill="#646464"/><rect x="205.53" y="30.80" width="1.2" height="1.6" fill="#646464"/><rect x="205.53" y="22.87" width="1.2" height="1.6" fill="#646464"/><rect x="205.53" y="14.94" width="1.2" height="1.6" fill="#646464"/><rect x="205.53" y="7.01" width="1.2" height="1.6" fill="#646464"/><rect x="213.46" y="221.12" width="1.2" height="1.6" fill="#646464"/><rect x="213.46" y="213.19" width="1.2" height="1.6" fill="#646464"/><rect x="213.46" y="205.26" width="1.2" height="1.6" fill="#646464"/><rect x="213.46" y="197.33" width="1.2" height="1.6" fill="#646464"/><rect x="213.46" y="189.40" width="1.2" height="1.6" fill="#646464"/><rect x="213.46" y="181.47" width="1.2" height="1.6" fill="#646464"/><rect x="213.46" y="173.54" width="1.2" height="1.6" fill="#646464"/><rect x="213.46" y="165.61" width="1.2" height="1.6" fill="#646464"/><rect x="213.46" y="157.68" width="1.2" height="1.6" fill="#646464"/><rect x="213.46" y="149.75" width="1.2" height="1.6" fill="#646464"/><rect x="213.46" y="141.82" width="1.2" height="1.6" fill="#646464"/><rect x="213.46" y="133.89" width="1.2" height="1.6" fill="#646464"/><rect x="213.46" y="125.96" width="1.2" height="1.6" fill="#646464"/><rect x="213.46" y="118.03" width="1.2" height="1.6" fill="#646464"/><rect x="213.46" y="110.10" width="1.2" height="1.6" fill="#646464"/><rect x="213.46" y="102.17" width="1.2" height="1.6" fill="#646464"/><rect x="213.46" y="94.24" width="1.2" height="1.6" fill="#646464"/><rect x="213.46" y="86.31" width="1.2" height="1.6" fill="#646464"/><rect x="213.46" y="78.38" width="1.2" height="1.6" fill="#646464"/><rect x="213.46" y="70.45" width="1.2" height="1.6" fill="#646464"/><rect x="213.46" y="62.52" width="1.2" height="1.6" fill="#646464"/><rect x="213.46" y="54.59" width="1.2" height="1.6" fill="#646464"/><rect x="213.46" y="46.66" width="1.2" height="1.6" fill="#646464"/><rect x="213.46" y="38.73" width="1.2" height="1.6" fill="#646464"/><rect x="213.46" y="30.80" width="1.2" height="1.6" fill="#646464"/><rect x="213.46" y="22.87" width="1.2" height="1.6" fill="#646464"/><rect x="213.46" y="14.94" width="1.2" height="1.6" fill="#646464"/><rect x="213.46" y="7.01" width="1.2" height="1.6" fill="#646464"/><rect x="221.39" y="221.12" width="1.2" height="1.6" fill="#646464"/><rect x="221.39" y="213.19" width="1.2" height="1.6" fill="#646464"/><rect x="221.39" y="205.26" width="1.2" height="1.6" fill="#646464"/><rect x="221.39" y="197.33" width="1.2" height="1.6" fill="#646464"/><rect x="221.39" y="189.40" width="1.2" height="1.6" fill="#646464"/><rect x="221.39" y="181.47" width="1.2" height="1.6" fill="#646464"/><rect x="221.39" y="173.54" width="1.2" height="1.6" fill="#646464"/><rect x="221.39" y="165.61" width="1.2" height="1.6" fill="#646464"/><rect x="221.39" y="157.68" width="1.2" height="1.6" fill="#646464"/><rect x="221.39" y="149.75" width="1.2" height="1.6" fill="#646464"/><rect x="221.39" y="141.82" width="1.2" height="1.6" fill="#646464"/><rect x="221.39" y="133.89" width="1.2" height="1.6" fill="#646464"/><rect x="221.39" y="125.96" width="1.2" height="1.6" fill="#646464"/><rect x="221.39" y="118.03" width="1.2" height="1.6" fill="#646464"/><rect x="221.39" y="110.10" width="1.2" height="1.6" fill="#646464"/><rect x="221.39" y="102.17" width="1.2" height="1.6" fill="#646464"/><rect x="221.39" y="94.24" width="1.2" height="1.6" fill="#646464"/><rect x="221.39" y="86.31" width="1.2" height="1.6" fill="#646464"/><rect x="221.39" y="78.38" width="1.2" height="1.6" fill="#646464"/><rect x="221.39" y="70.45" width="1.2" height="1.6" fill="#646464"/><rect x="221.39" y="62.52" width="1.2" height="1.6" fill="#646464"/><rect x="221.39" y="54.59" width="1.2" height="1.6" fill="#646464"/><rect x="221.39" y="46.66" width="1.2" height="1.6" fill="#646464"/><rect x="221.39" y="38.73" width="1.2" height="1.6" fill="#646464"/><rect x="221.39" y="30.80" width="1.2" height="1.6" fill="#646464"/><rect x="221.39" y="22.87" width="1.2" height="1.6" fill="#646464"/><rect x="221.39" y="14.94" width="1.2" height="1.6" fill="#646464"/><rect x="221.39" y="7.01" width="1.2" height="1.6" fill="#646464"/><rect x="229.32" y="221.12" width="1.2" height="1.6" fill="#646464"/><rect x="229.32" y="213.19" width="1.2" height="1.6" fill="#646464"/><rect x="229.32" y="205.26" width="1.2" height="1.6" fill="#646464"/><rect x="229.32" y="197.33" width="1.2" height="1.6" fill="#646464"/><rect x="229.32" y="189.40" width="1.2" height="1.6" fill="#646464"/><rect x="229.32" y="181.47" width="1.2" height="1.6" fill="#646464"/><rect x="229.32" y="173.54" width="1.2" height="1.6" fill="#646464"/><rect x="229.32" y="165.61" width="1.2" height="1.6" fill="#646464"/><rect x="229.32" y="157.68" width="1.2" height="1.6" fill="#646464"/><rect x="229.32" y="149.75" width="1.2" height="1.6" fill="#646464"/><rect x="229.32" y="141.82" width="1.2" height="1.6" fill="#646464"/><rect x="229.32" y="133.89" width="1.2" height="1.6" fill="#646464"/><rect x="229.32" y="125.96" width="1.2" height="1.6" fill="#646464"/><rect x="229.32" y="118.03" width="1.2" height="1.6" fill="#646464"/><rect x="229.32" y="110.10" width="1.2" height="1.6" fill="#646464"/><rect x="229.32" y="102.17" width="1.2" height="1.6" fill="#646464"/><rect x="229.32" y="94.24" width="1.2" height="1.6" fill="#646464"/><rect x="229.32" y="86.31" width="1.2" height="1.6" fill="#646464"/><rect x="229.32" y="78.38" width="1.2" height="1.6" fill="#646464"/><rect x="229.32" y="70.45" width="1.2" height="1.6" fill="#646464"/><rect x="229.32" y="62.52" width="1.2" height="1.6" fill="#646464"/><rect x="229.32" y="54.59" width="1.2" height="1.6" fill="#646464"/><rect x="229.32" y="46.66" width="1.2" height="1.6" fill="#646464"/><rect x="229.32" y="38.73" width="1.2" height="1.6" fill="#646464"/><rect x="229.32" y="30.80" width="1.2" height="1.6" fill="#646464"/><rect x="229.32" y="22.87" width="1.2" height="1.6" fill="#646464"/><rect x="229.32" y="14.94" width="1.2" height="1.6" fill="#646464"/><rect x="229.32" y="7.01" width="1.2" height="1.6" fill="#646464"/><rect x="237.25" y="221.12" width="1.2" height="1.6" fill="#646464"/><rect x="237.25" y="213.19" width="1.2" height="1.6" fill="#646464"/><rect x="237.25" y="205.26" width="1.2" height="1.6" fill="#646464"/><rect x="237.25" y="197.33" width="1.2" height="1.6" fill="#646464"/><rect x="237.25" y="189.40" width="1.2" height="1.6" fill="#646464"/><rect x="237.25" y="181.47" width="1.2" height="1.6" fill="#646464"/><rect x="237.25" y="173.54" width="1.2" height="1.6" fill="#646464"/><rect x="237.25" y="165.61" width="1.2" height="1.6" fill="#646464"/><rect x="237.25" y="157.68" width="1.2" height="1.6" fill="#646464"/><rect x="237.25" y="149.75" width="1.2" height="1.6" fill="#646464"/><rect x="237.25" y="141.82" width="1.2" height="1.6" fill="#646464"/><rect x="237.25" y="133.89" width="1.2" height="1.6" fill="#646464"/><rect x="237.25" y="125.96" width="1.2" height="1.6" fill="#646464"/><rect x="237.25" y="118.03" width="1.2" height="1.6" fill="#646464"/><rect x="237.25" y="110.10" width="1.2" height="1.6" fill="#646464"/><rect x="237.25" y="102.17" width="1.2" height="1.6" fill="#646464"/><rect x="237.25" y="94.24" width="1.2" height="1.6" fill="#646464"/><rect x="237.25" y="86.31" width="1.2" height="1.6" fill="#646464"/><rect x="237.25" y="78.38" width="1.2" height="1.6" fill="#646464"/><rect x="237.25" y="70.45" width="1.2" height="1.6" fill="#646464"/><rect x="237.25" y="62.52" width="1.2" height="1.6" fill="#646464"/><rect x="237.25" y="54.59" width="1.2" height="1.6" fill="#646464"/><rect x="237.25" y="46.66" width="1.2" height="1.6" fill="#646464"/><rect x="237.25" y="38.73" width="1.2" height="1.6" fill="#646464"/><rect x="237.25" y="30.80" width="1.2" height="1.6" fill="#646464"/><rect x="237.25" y="22.87" width="1.2" height="1.6" fill="#646464"/><rect x="237.25" y="14.94" width="1.2" height="1.6" fill="#646464"/><rect x="237.25" y="7.01" width="1.2" height="1.6" fill="#646464"/><rect x="245.18" y="221.12" width="1.2" height="1.6" fill="#646464"/><rect x="245.18" y="213.19" width="1.2" height="1.6" fill="#646464"/><rect x="245.18" y="205.26" width="1.2" height="1.6" fill="#646464"/><rect x="245.18" y="197.33" width="1.2" height="1.6" fill="#646464"/><rect x="245.18" y="189.40" width="1.2" height="1.6" fill="#646464"/><rect x="245.18" y="181.47" width="1.2" height="1.6" fill="#646464"/><rect x="245.18" y="173.54" width="1.2" height="1.6" fill="#646464"/><rect x="245.18" y="165.61" width="1.2" height="1.6" fill="#646464"/><rect x="245.18" y="157.68" width="1.2" height="1.6" fill="#646464"/><rect x="245.18" y="149.75" width="1.2" height="1.6" fill="#646464"/><rect x="245.18" y="141.82" width="1.2" height="1.6" fill="#646464"/><rect x="245.18" y="133.89" width="1.2" height="1.6" fill="#646464"/><rect x="245.18" y="125.96" width="1.2" height="1.6" fill="#646464"/><rect x="245.18" y="118.03" width="1.2" height="1.6" fill="#646464"/><rect x="245.18" y="110.10" width="1.2" height="1.6" fill="#646464"/><rect x="245.18" y="102.17" width="1.2" height="1.6" fill="#646464"/><rect x="245.18" y="94.24" width="1.2" height="1.6" fill="#646464"/><rect x="245.18" y="86.31" width="1.2" height="1.6" fill="#646464"/><rect x="245.18" y="78.38" width="1.2" height="1.6" fill="#646464"/><rect x="245.18" y="70.45" width="1.2" height="1.6" fill="#646464"/><rect x="245.18" y="62.52" width="1.2" height="1.6" fill="#646464"/><rect x="245.18" y="54.59" width="1.2" height="1.6" fill="#646464"/><rect x="245.18" y="46.66" width="1.2" height="1.6" fill="#646464"/><rect x="245.18" y="38.73" width="1.2" height="1.6" fill="#646464"/><rect x="245.18" y="30.80" width="1.2" height="1.6" fill="#646464"/><rect x="245.18" y="22.87" width="1.2" height="1.6" fill="#646464"/><rect x="245.18" y="14.94" width="1.2" height="1.6" fill="#646464"/><rect x="245.18" y="7.01" width="1.2" height="1.6" fill="#646464"/><rect x="253.11" y="221.12" width="1.2" height="1.6" fill="#646464"/><rect x="253.11" y="213.19" width="1.2" height="1.6" fill="#646464"/><rect x="253.11" y="205.26" width="1.2" height="1.6" fill="#646464"/><rect x="253.11" y="197.33" width="1.2" height="1.6" fill="#646464"/><rect x="253.11" y="189.40" width="1.2" height="1.6" fill="#646464"/><rect x="253.11" y="181.47" width="1.2" height="1.6" fill="#646464"/><rect x="253.11" y="173.54" width="1.2" height="1.6" fill="#646464"/><rect x="253.11" y="165.61" width="1.2" height="1.6" fill="#646464"/><rect x="253.11" y="157.68" width="1.2" height="1.6" fill="#646464"/><rect x="253.11" y="149.75" width="1.2" height="1.6" fill="#646464"/><rect x="253.11" y="141.82" width="1.2" height="1.6" fill="#646464"/><rect x="253.11" y="133.89" width="1.2" height="1.6" fill="#646464"/><rect x="253.11" y="125.96" width="1.2" height="1.6" fill="#646464"/><rect x="253.11" y="118.03" width="1.2" height="1.6" fill="#646464"/><rect x="253.11" y="110.10" width="1.2" height="1.6" fill="#646464"/><rect x="253.11" y="102.17" width="1.2" height="1.6" fill="#646464"/><rect x="253.11" y="94.24" width="1.2" height="1.6" fill="#646464"/><rect x="253.11" y="86.31" width="1.2" height="1.6" fill="#646464"/><rect x="253.11" y="78.38" width="1.2" height="1.6" fill="#646464"/><rect x="253.11" y="70.45" width="1.2" height="1.6" fill="#646464"/><rect x="253.11" y="62.52" width="1.2" height="1.6" fill="#646464"/><rect x="253.11" y="54.59" width="1.2" height="1.6" fill="#646464"/><rect x="253.11" y="46.66" width="1.2" height="1.6" fill="#646464"/><rect x="253.11" y="38.73" width="1.2" height="1.6" fill="#646464"/><rect x="253.11" y="30.80" width="1.2" height="1.6" fill="#646464"/><rect x="253.11" y="22.87" width="1.2" height="1.6" fill="#646464"/><rect x="253.11" y="14.94" width="1.2" height="1.6" fill="#646464"/><rect x="253.11" y="7.01" width="1.2" height="1.6" fill="#646464"/><path d="M23.599999999999994 190.2 L56.099999999999994 190.2 M39.599999999999994 173.7 L39.599999999999994 206.7" stroke="#c80000" stroke-width="1.05"/><circle cx="39.599999999999994" cy="190.2" r="4.3" fill="none" stroke="#a00000" stroke-width="1"/></svg>
<svg class="ab" style="left:88px;top:118px" width="260" height="16" viewBox="0 0 260 16"><path d="M0.5 11 L0.5 16" stroke="#222" stroke-width="1"/><path d="M8.5 13.5 L8.5 16" stroke="#222" stroke-width="1"/><path d="M16.5 13.5 L16.5 16" stroke="#222" stroke-width="1"/><path d="M24.5 13.5 L24.5 16" stroke="#222" stroke-width="1"/><path d="M32.5 13.5 L32.5 16" stroke="#222" stroke-width="1"/><path d="M40.5 11 L40.5 16" stroke="#222" stroke-width="1"/><path d="M48.5 13.5 L48.5 16" stroke="#222" stroke-width="1"/><path d="M55.5 13.5 L55.5 16" stroke="#222" stroke-width="1"/><path d="M63.5 13.5 L63.5 16" stroke="#222" stroke-width="1"/><path d="M71.5 13.5 L71.5 16" stroke="#222" stroke-width="1"/><path d="M79.5 11 L79.5 16" stroke="#222" stroke-width="1"/><path d="M87.5 13.5 L87.5 16" stroke="#222" stroke-width="1"/><path d="M95.5 13.5 L95.5 16" stroke="#222" stroke-width="1"/><path d="M103.5 13.5 L103.5 16" stroke="#222" stroke-width="1"/><path d="M111.5 13.5 L111.5 16" stroke="#222" stroke-width="1"/><path d="M119.5 11 L119.5 16" stroke="#222" stroke-width="1"/><path d="M127.5 13.5 L127.5 16" stroke="#222" stroke-width="1"/><path d="M135.5 13.5 L135.5 16" stroke="#222" stroke-width="1"/><path d="M143.5 13.5 L143.5 16" stroke="#222" stroke-width="1"/><path d="M151.5 13.5 L151.5 16" stroke="#222" stroke-width="1"/><path d="M159.5 11 L159.5 16" stroke="#222" stroke-width="1"/><path d="M166.5 13.5 L166.5 16" stroke="#222" stroke-width="1"/><path d="M174.5 13.5 L174.5 16" stroke="#222" stroke-width="1"/><path d="M182.5 13.5 L182.5 16" stroke="#222" stroke-width="1"/><path d="M190.5 13.5 L190.5 16" stroke="#222" stroke-width="1"/><path d="M198.5 11 L198.5 16" stroke="#222" stroke-width="1"/><path d="M206.5 13.5 L206.5 16" stroke="#222" stroke-width="1"/><path d="M214.5 13.5 L214.5 16" stroke="#222" stroke-width="1"/><path d="M222.5 13.5 L222.5 16" stroke="#222" stroke-width="1"/><path d="M230.5 13.5 L230.5 16" stroke="#222" stroke-width="1"/><path d="M238.5 11 L238.5 16" stroke="#222" stroke-width="1"/><path d="M246.5 13.5 L246.5 16" stroke="#222" stroke-width="1"/><path d="M254.5 13.5 L254.5 16" stroke="#222" stroke-width="1"/></svg>
<div class="t" style="left:88.0px;top:119px;font-size:8.5px;color:#111">5</div>
<div class="t" style="left:125.0px;top:119px;font-size:8.5px;color:#111">0</div>
<div class="t" style="left:164.7px;top:119px;font-size:8.5px;color:#111">5</div>
<div class="t" style="left:201.7px;top:119px;font-size:8.5px;color:#111">10</div>
<div class="t" style="left:241.3px;top:119px;font-size:8.5px;color:#111">15</div>
<div class="t" style="left:281.0px;top:119px;font-size:8.5px;color:#111">20</div>
<div class="t" style="left:320.7px;top:119px;font-size:8.5px;color:#111">25</div>
<div class="ab" style="left:299.5px;top:128px;width:0;height:0;border-left:2.5px solid transparent;border-right:2.5px solid transparent;border-top:3px solid #111"></div>
<svg class="ab" style="left:73px;top:134px" width="15" height="229" viewBox="0 0 15 229"><path d="M12.5 222.5 L15 222.5" stroke="#222" stroke-width="1"/><path d="M12.5 214.5 L15 214.5" stroke="#222" stroke-width="1"/><path d="M12.5 206.5 L15 206.5" stroke="#222" stroke-width="1"/><path d="M12.5 198.5 L15 198.5" stroke="#222" stroke-width="1"/><path d="M10 190.5 L15 190.5" stroke="#222" stroke-width="1"/><path d="M12.5 182.5 L15 182.5" stroke="#222" stroke-width="1"/><path d="M12.5 174.5 L15 174.5" stroke="#222" stroke-width="1"/><path d="M12.5 166.5 L15 166.5" stroke="#222" stroke-width="1"/><path d="M12.5 158.5 L15 158.5" stroke="#222" stroke-width="1"/><path d="M10 151.5 L15 151.5" stroke="#222" stroke-width="1"/><path d="M12.5 143.5 L15 143.5" stroke="#222" stroke-width="1"/><path d="M12.5 135.5 L15 135.5" stroke="#222" stroke-width="1"/><path d="M12.5 127.5 L15 127.5" stroke="#222" stroke-width="1"/><path d="M12.5 119.5 L15 119.5" stroke="#222" stroke-width="1"/><path d="M10 111.5 L15 111.5" stroke="#222" stroke-width="1"/><path d="M12.5 103.5 L15 103.5" stroke="#222" stroke-width="1"/><path d="M12.5 95.5 L15 95.5" stroke="#222" stroke-width="1"/><path d="M12.5 87.5 L15 87.5" stroke="#222" stroke-width="1"/><path d="M12.5 79.5 L15 79.5" stroke="#222" stroke-width="1"/><path d="M10 71.5 L15 71.5" stroke="#222" stroke-width="1"/><path d="M12.5 63.5 L15 63.5" stroke="#222" stroke-width="1"/><path d="M12.5 55.5 L15 55.5" stroke="#222" stroke-width="1"/><path d="M12.5 47.5 L15 47.5" stroke="#222" stroke-width="1"/><path d="M12.5 40.5 L15 40.5" stroke="#222" stroke-width="1"/><path d="M10 32.5 L15 32.5" stroke="#222" stroke-width="1"/><path d="M12.5 24.5 L15 24.5" stroke="#222" stroke-width="1"/><path d="M12.5 16.5 L15 16.5" stroke="#222" stroke-width="1"/><path d="M12.5 8.5 L15 8.5" stroke="#222" stroke-width="1"/><path d="M12.5 0.5 L15 0.5" stroke="#222" stroke-width="1"/></svg>
<div class="t" style="left:73.5px;top:164.6px;font-size:8.5px;color:#111;transform-origin:0 0;transform:rotate(-90deg) translate(-5.2px,0)">20</div>
<div class="t" style="left:73.5px;top:204.2px;font-size:8.5px;color:#111;transform-origin:0 0;transform:rotate(-90deg) translate(-5.2px,0)">15</div>
<div class="t" style="left:73.5px;top:243.9px;font-size:8.5px;color:#111;transform-origin:0 0;transform:rotate(-90deg) translate(-5.2px,0)">10</div>
<div class="t" style="left:73.5px;top:283.6px;font-size:8.5px;color:#111;transform-origin:0 0;transform:rotate(-90deg) translate(-2.6px,0)">5</div>
<div class="t" style="left:73.5px;top:323.2px;font-size:8.5px;color:#111;transform-origin:0 0;transform:rotate(-90deg) translate(-2.6px,0)">0</div>
<div class="t" style="left:73.5px;top:362.8px;font-size:8.5px;color:#111;transform-origin:0 0;transform:rotate(-90deg) translate(-2.6px,0)">5</div>
<div class="ab" style="left:81px;top:149px;width:0;height:0;border-top:2.5px solid transparent;border-bottom:2.5px solid transparent;border-left:3.5px solid #111"></div>
<div class="ab" style="left:348px;top:118px;width:13px;height:16px;background:#f2f2f2;border-left:1px solid #d8d8d8;border-bottom:1px solid #d8d8d8"></div>
<div class="ab" style="left:348px;top:134px;width:13px;height:229px;background:#ececec"></div>
<div class="ab" style="left:352.5px;top:140px;width:0;height:0;border-left:3px solid transparent;border-right:3px solid transparent;border-bottom:3px solid #444"></div>
<div class="ab" style="left:352.5px;top:355px;width:0;height:0;border-left:3px solid transparent;border-right:3px solid transparent;border-top:3px solid #444"></div>
<div class="ab" style="left:349px;top:219px;width:12px;height:35px;border:1px solid #9c9c9c;border-radius:2px;background:linear-gradient(90deg,#f4f4f4,#dcdcdc)"></div>
<div class="ab" style="left:352px;top:234px;width:5px;height:6px;background:repeating-linear-gradient(#555 0 1px,transparent 1px 2px)"></div>
<div class="ab" style="left:88px;top:363px;width:230px;height:13px;background:#ececec"></div>
<div class="ab" style="left:73px;top:363px;width:15px;height:13px;background:#f0f0f0"></div>
<div class="ab" style="left:93px;top:367px;width:0;height:0;border-top:3px solid transparent;border-bottom:3px solid transparent;border-right:3px solid #444"></div>
<div class="ab" style="left:309px;top:367px;width:0;height:0;border-top:3px solid transparent;border-bottom:3px solid transparent;border-left:3px solid #444"></div>
<div class="ab" style="left:198px;top:364px;width:39px;height:12px;border:1px solid #9c9c9c;border-radius:2px;background:linear-gradient(#f4f4f4,#dcdcdc)"></div>
<div class="ab" style="left:215px;top:367px;width:5px;height:5px;background:repeating-linear-gradient(90deg,#555 0 1px,transparent 1px 2px)"></div>
<div class="t" style="left:332.5px;top:366px;font-family:'Liberation Serif', serif;font-size:10px;letter-spacing:0.6px;color:#111">1 &lt; 10</div>
<div class="ab" style="left:72px;top:379px;width:290px;height:52px;background:#fff;border:1px solid #a8a8a8;border-right:1px solid #9a9a9a"></div>
<div class="ab" style="left:73px;top:410px;width:288px;height:1px;background:#a0a0a0"></div>
<div class="t ss" style="left:76px;top:386.5px;font-size:9.6px;font-style:italic;color:#1c1ce0;transform:scaleX(0.81)">Command: new</div>
<div class="t ss" style="left:71.5px;top:417px;font-size:9.6px;color:#111;transform:scaleX(0.87)">Command:</div>
<div class="ab" style="left:343px;top:413px;width:17px;height:16px;border:1px solid #777;border-radius:2px;background:#f4f4f4"></div>
<div class="ab" style="left:346px;top:416px;width:11px;height:9px;border:1px solid #444;border-top:2px solid #111;background:#e8e8e8"></div>
<div class="ab" style="left:365px;top:100px;width:202px;height:15px;background:#dadada;border-top:1px solid #c0c0c0;border-bottom:1px solid #c4c4c4"></div>
<div class="t ss" style="left:367.5px;top:104px;font-size:9.6px;color:#111;transform:scaleX(0.83)">Layer List</div>
<svg class="ab" style="left:543.5px;top:103.5px" width="8" height="8" viewBox="0 0 8 8"><rect x="2.6" y="0.6" width="4.8" height="4.2" fill="none" stroke="#111" stroke-width="1.1"/><rect x="0.6" y="2.8" width="4.6" height="4.4" fill="#dadada" stroke="#111" stroke-width="1.1"/></svg>
<svg class="ab" style="left:556.5px;top:104px" width="8" height="7" viewBox="0 0 8 7"><path d="M1 0.8 L7 6.2 M7 0.8 L1 6.2" stroke="#111" stroke-width="1.3"/></svg>
<div class="ab" style="left:366px;top:117px;width:38px;height:16px;border:1px solid #9a9a9a;border-radius:3px;background:linear-gradient(#f8f8f8,#e8e8e8 50%,#d8d8d8)"><svg class="ab" style="left:12px;top:1.5px" width="14" height="11" viewBox="0 0 14 11"><path d="M0.5 5.5 Q7 -2 13.5 5.5 Q7 13 0.5 5.5 Z" fill="#111"/><ellipse cx="7" cy="5.5" rx="3.6" ry="2.8" fill="#fff"/><circle cx="7" cy="5.5" r="2" fill="#111"/></svg></div>
<div class="ab" style="left:406px;top:117px;width:38px;height:16px;border:1px solid #9a9a9a;border-radius:3px;background:linear-gradient(#f8f8f8,#e8e8e8 50%,#d8d8d8)"><svg class="ab" style="left:12px;top:1.5px" width="14" height="11" viewBox="0 0 14 11"><path d="M0.5 5.5 Q7 -2 13.5 5.5 Q7 13 0.5 5.5 Z" fill="#a8a8a8"/><ellipse cx="7" cy="5.5" rx="3.6" ry="2.8" fill="#fff"/><circle cx="7" cy="5.5" r="2" fill="#a8a8a8"/></svg></div>
<div class="ab" style="left:446px;top:117px;width:40px;height:16px;border:1px solid #9a9a9a;border-radius:3px;background:linear-gradient(#f8f8f8,#e8e8e8 50%,#d8d8d8)"><div class="ab" style="left:17px;top:2px;width:3px;height:11px;background:#e01010"></div><div class="ab" style="left:13px;top:6px;width:11px;height:3px;background:#e01010"></div></div>
<div class="ab" style="left:488px;top:117px;width:38px;height:16px;border:1px solid #c8c8c8;border-radius:3px;background:#f0f0f0"><div class="ab" style="left:13px;top:6px;width:11px;height:3px;background:#a0a0a0"></div></div>
<div class="ab" style="left:528px;top:117px;width:39px;height:16px;border:1px solid #9a9a9a;border-radius:3px;background:linear-gradient(#f8f8f8,#e8e8e8 50%,#d8d8d8)"><svg class="ab" style="left:12px;top:1px" width="14" height="14" viewBox="0 0 14 14"><path d="M1.5 12.5 L11 3" stroke="#b88020" stroke-width="3.2" stroke-linecap="butt"/><path d="M1.5 12.5 L11 3" stroke="#f0c040" stroke-width="1.8"/><path d="M10 4 L12.5 1.5" stroke="#e02828" stroke-width="3"/><path d="M0.5 13.5 L2.5 11.5" stroke="#444" stroke-width="1.5"/></svg></div>
<div class="ab" style="left:365px;top:134px;width:202px;height:56px;background:#fff;border:1px solid #a8a8a8"></div>
<div class="ab" style="left:366px;top:135px;width:200px;height:15px;background:linear-gradient(#f8f8f8,#ececec)"></div>
<div class="ab" style="left:368px;top:139px;width:13px;height:7px;background:#c8e4f8;border:1px solid #3a5a8a"></div>
<div class="t" style="left:384.8px;top:138.3px;font-size:10.3px;color:#1a2a4a;-webkit-text-stroke:0.12px #1a2a4a">0</div>
<svg class="ab" style="left:533px;top:137px" width="13" height="10" viewBox="0 0 13 10"><path d="M0.5 5 Q6.5 -1.5 12.5 5 Q6.5 11.5 0.5 5 Z" fill="#1a3560"/><circle cx="6.5" cy="5" r="2.3" fill="#fff"/><circle cx="6.5" cy="5" r="1.3" fill="#1a3560"/></svg>
<svg class="ab" style="left:553px;top:136px" width="9" height="13" viewBox="0 0 9 13"><path d="M2 6 L2 4 A2.5 2.5 0 0 1 7 4 L7 6" fill="none" stroke="#9ab4d4" stroke-width="1.3"/><rect x="0.5" y="6" width="8" height="7" fill="#9ab4d4"/></svg>
<div class="ab" style="left:365px;top:194px;width:202px;height:15px;background:#dadada;border-top:1px solid #b8b8b8;border-bottom:1px solid #bcbcbc"></div>
<div class="t ss" style="left:368px;top:199px;font-size:9.6px;color:#111;transform:scaleX(0.82)">Trial</div>
<div class="ab" style="left:365px;top:210px;width:202px;height:221px;background:#fff;border:1px solid #b4b4b4;border-top:none"></div>
<div class="ab" style="left:368px;top:216.7px;white-space:pre;font-family:'Liberation Mono', monospace;font-size:9.6px;color:#000;line-height:11px;transform:scaleX(0.83);transform-origin:0 0">The following add-ons are running in
trial mode:</div>
<div class="ab" style="left:368px;top:248px;width:182px;height:124px;background:#dcdcdc"></div>
<div class="t" style="left:373px;top:254.5px;font-size:9.1px;font-weight:bold;color:#1a1a1a">QCAD Pro</div>
<div class="ab" style="left:370px;top:268px;width:47px;height:18px;background:#8dc63f"></div>
<div class="t" style="left:373px;top:272.5px;font-size:9.2px;font-weight:bold;color:#fff">Active</div>
<div class="ab" style="left:418px;top:268px;width:37px;height:18px;background:#3a9ff0"></div>
<div class="t" style="left:421px;top:272.5px;font-size:9.2px;font-weight:bold;color:#fff">Info</div>
<div class="ab" style="left:456px;top:268px;width:35px;height:18px;background:#3a9ff0"></div>
<div class="t" style="left:459px;top:272.5px;font-size:9.2px;font-weight:bold;color:#fff">Buy</div>
<div class="ab" style="left:492px;top:268px;width:56px;height:18px;background:#3a9ff0"></div>
<div class="t" style="left:495px;top:272.5px;font-size:9.2px;font-weight:bold;color:#fff">Remove</div>
<div class="ab" style="left:373px;top:291px;white-space:pre;font-size:8.6px;color:#222;line-height:11px">DWG support (Teigha®), enhanced DXF
support (Teigha®), SVG export, block
attributes, context menu, splines from fit
points, polyline tools, multi page printing,
24bit colors, complex line types, paste along
entity, command line tools, <span style="color:#3a9ff0">and more...</span></div>
<div class="ab" style="left:368px;top:397px;white-space:pre;font-family:'Liberation Mono', monospace;font-size:9.6px;color:#000;line-height:11px;transform:scaleX(0.83);transform-origin:0 0">If you would like to use one of these
add-ons productively, please purchase
the full version for a small license</div>
<div class="ab" style="left:554px;top:211px;width:12px;height:219px;background:#ececec"></div>
<div class="ab" style="left:557px;top:218px;width:0;height:0;border-left:3px solid transparent;border-right:3px solid transparent;border-bottom:3.5px solid #333"></div>
<div class="ab" style="left:557px;top:421px;width:0;height:0;border-left:3px solid transparent;border-right:3px solid transparent;border-top:3.5px solid #333"></div>
<div class="ab" style="left:554px;top:226px;width:12px;height:144px;border:1px solid #9c9c9c;border-radius:2px;background:linear-gradient(90deg,#f4f4f4,#d8d8d8)"></div>
<div class="ab" style="left:557px;top:294px;width:5px;height:6px;background:repeating-linear-gradient(#555 0 1px,transparent 1px 2px)"></div>
<div class="ab" style="left:571px;top:102px;width:20px;height:2px;background:repeating-linear-gradient(90deg,#b0b0b0 0 1px,transparent 1px 3px)"></div>
<div class="ab" style="left:569px;top:107px;width:23px;height:23px;border:1px solid #8a8a8a;background:linear-gradient(#a8a8a8,#f0f0f0)"></div>
<svg class="ab" style="left:573px;top:110px" width="16" height="17" viewBox="0 0 16 17"><rect x="0.5" y="0.5" width="15" height="16" fill="#fff" stroke="#999" stroke-width="0.8"/><rect x="1" y="1" width="14" height="3" fill="#111"/><path d="M4 14 L4 7 L10 5 L10 12 Z" fill="#f2a0a8" stroke="#777" stroke-width="0.8"/><path d="M6 14 L6 8 L12 6" fill="none" stroke="#888" stroke-width="0.8"/></svg>
<svg class="ab" style="left:573px;top:132px" width="16" height="17" viewBox="0 0 16 17"><rect x="0.5" y="0.5" width="15" height="16" fill="#fff" stroke="#999" stroke-width="0.8"/><rect x="1" y="1" width="14" height="3" fill="#111"/><circle cx="7" cy="10" r="3" fill="#e8d890" stroke="#998" stroke-width="0.8"/><circle cx="9.5" cy="11.5" r="3" fill="#e0d080" stroke="#998" stroke-width="0.8"/></svg>
<svg class="ab" style="left:573px;top:155px" width="16" height="17" viewBox="0 0 16 17"><rect x="0.5" y="0.5" width="15" height="16" fill="#fff" stroke="#999" stroke-width="0.8"/><rect x="1" y="1" width="14" height="3" fill="#111"/><rect x="3" y="7" width="10" height="6" fill="#eef2f8" stroke="#c8d0e0" stroke-width="0.8"/></svg>
<svg class="ab" style="left:573px;top:183px" width="16" height="17" viewBox="0 0 16 17"><rect x="0.5" y="0.5" width="15" height="16" fill="#fff" stroke="#999" stroke-width="0.8"/><rect x="1" y="1" width="14" height="3" fill="#111"/><path d="M3 7 L4 7 M3 10 L4 10 M3 13 L4 13" stroke="#111" stroke-width="1.6"/><rect x="6" y="6" width="7" height="2" fill="#eee" stroke="#888" stroke-width="0.5"/><rect x="6" y="9" width="7" height="2" fill="#eee" stroke="#888" stroke-width="0.5"/><rect x="6" y="12" width="7" height="2" fill="#eee" stroke="#888" stroke-width="0.5"/></svg>
<svg class="ab" style="left:573px;top:206px" width="16" height="17" viewBox="0 0 16 17"><rect x="0.5" y="0.5" width="15" height="16" fill="#fff" stroke="#999" stroke-width="0.8"/><rect x="1" y="1" width="14" height="3" fill="#111"/><path d="M3 6 L13 6 L9 10 L9 14 L7 14 L7 10 Z" fill="#b0b0b0" stroke="#888" stroke-width="0.6"/></svg>
<svg class="ab" style="left:573px;top:229px" width="16" height="17" viewBox="0 0 16 17"><rect x="0.5" y="0.5" width="15" height="16" fill="#fff" stroke="#999" stroke-width="0.8"/><rect x="1" y="1" width="14" height="3" fill="#111"/><rect x="3" y="7" width="2" height="8" fill="#c8a080"/><rect x="6" y="8" width="7" height="5" fill="#777"/></svg>
<div class="ab" style="left:569px;top:254px;width:23px;height:23px;border:1px solid #8a8a8a;background:linear-gradient(#a8a8a8,#f0f0f0)"></div>
<svg class="ab" style="left:573px;top:257px" width="16" height="17" viewBox="0 0 16 17"><rect x="0.5" y="0.5" width="15" height="16" fill="#fff" stroke="#999" stroke-width="0.8"/><rect x="1" y="1" width="14" height="3" fill="#111"/><path d="M3 7 L10 7 M3 9 L12 9 M3 11 L9 11 M3 13 L11 13" stroke="#ccc" stroke-width="0.8"/></svg>
<svg class="ab" style="left:573px;top:280px" width="16" height="17" viewBox="0 0 16 17"><rect x="0.5" y="0.5" width="15" height="16" fill="#fff" stroke="#999" stroke-width="0.8"/><rect x="1" y="1" width="14" height="3" fill="#111"/><rect x="3" y="5" width="10" height="10" rx="1" fill="#e8c890" stroke="#b08040" stroke-width="0.8"/><rect x="5" y="7" width="6" height="6" fill="#f8f8f8"/></svg>
<div class="ab" style="left:567px;top:430px;width:27px;height:1px;background:#dcdcdc"></div>
<div class="ab" style="left:6px;top:431px;width:588px;height:34px;background:#f0f0f0"></div>
<div class="ab" style="left:6px;top:430px;width:588px;height:1px;background:#a8a8a8"></div>
<div class="ab" style="left:6px;top:431px;width:588px;height:1px;background:#fafafa"></div>
<div class="t" style="left:7.5px;top:436.5px;font-size:9.9px;color:#222;-webkit-text-stroke:0.15px #222">21.9,21.6</div>
<div class="t" style="left:7.5px;top:452.5px;font-size:9.9px;color:#222;-webkit-text-stroke:0.15px #222">@21.9,21.6</div>
<div class="ab" style="left:125px;top:433px;width:1px;height:31px;background:#a0a0a0"></div>
<div class="ab" style="left:126px;top:433px;width:1px;height:31px;background:#fff"></div>
<div class="ab" style="left:128px;top:434px;width:33px;height:30px;overflow:hidden"><div class="t" style="left:0;top:3px;font-size:10px;color:#222;-webkit-text-stroke:0.15px #222;">30.7599</div><div class="t" style="left:0;top:19px;font-size:10px;color:#222;-webkit-text-stroke:0.15px #222;">@30.7599</div></div>
<div class="t" style="left:165px;top:437.5px;font-size:10px;color:#222;-webkit-text-stroke:0.15px #222;">&lt;45°</div>
<div class="t" style="left:163px;top:453px;font-size:10px;color:#222;-webkit-text-stroke:0.15px #222;">99&lt;45°</div>
<div class="t" style="left:179px;top:437.5px;font-size:10.4px;color:#222;-webkit-text-stroke:0.15px #222;">Select entity or</div>
<div class="t" style="left:216.5px;top:452.5px;font-size:10.4px;color:#222;-webkit-text-stroke:0.15px #222;">region</div>
<svg class="ab" style="left:254px;top:434px" width="24" height="27" viewBox="0 0 24 27"><defs><radialGradient id="ms" cx="0.45" cy="0.4" r="0.65"><stop offset="0" stop-color="#fff"/><stop offset="0.6" stop-color="#f4f4f4"/><stop offset="1" stop-color="#b8b8b8"/></radialGradient></defs><path d="M6 3 L5 0.5" stroke="#333" stroke-width="1.2"/><path d="M4 4 C8 1.5 14 2.5 18 9 C22 15 23 21 19.5 24 C15.5 26.5 8 25.5 4 21.5 C1 17.5 0.5 8 4 4 Z" fill="url(#ms)" stroke="#8a8a8a" stroke-width="0.9"/><ellipse cx="10" cy="9.5" rx="1.4" ry="2.2" transform="rotate(-20 10 9.5)" fill="#3050d0"/></svg>
<div class="t" style="left:322.5px;top:444.5px;font-size:10.5px;color:#222;-webkit-text-stroke:0.15px #222;">No entities selected.</div>
<div class="ab" style="left:578px;top:433px;width:1px;height:31px;background:#c8c8c8"></div>
<div class="ab" style="left:590px;top:457px;width:1px;height:1px;background:#999"></div>
<div class="ab" style="left:587px;top:460px;width:1px;height:1px;background:#999"></div>
<div class="ab" style="left:590px;top:460px;width:1px;height:1px;background:#999"></div>
<div class="ab" style="left:584px;top:463px;width:1px;height:1px;background:#999"></div>
<div class="ab" style="left:587px;top:463px;width:1px;height:1px;background:#999"></div>
<div class="ab" style="left:590px;top:463px;width:1px;height:1px;background:#999"></div>
</body></html>
